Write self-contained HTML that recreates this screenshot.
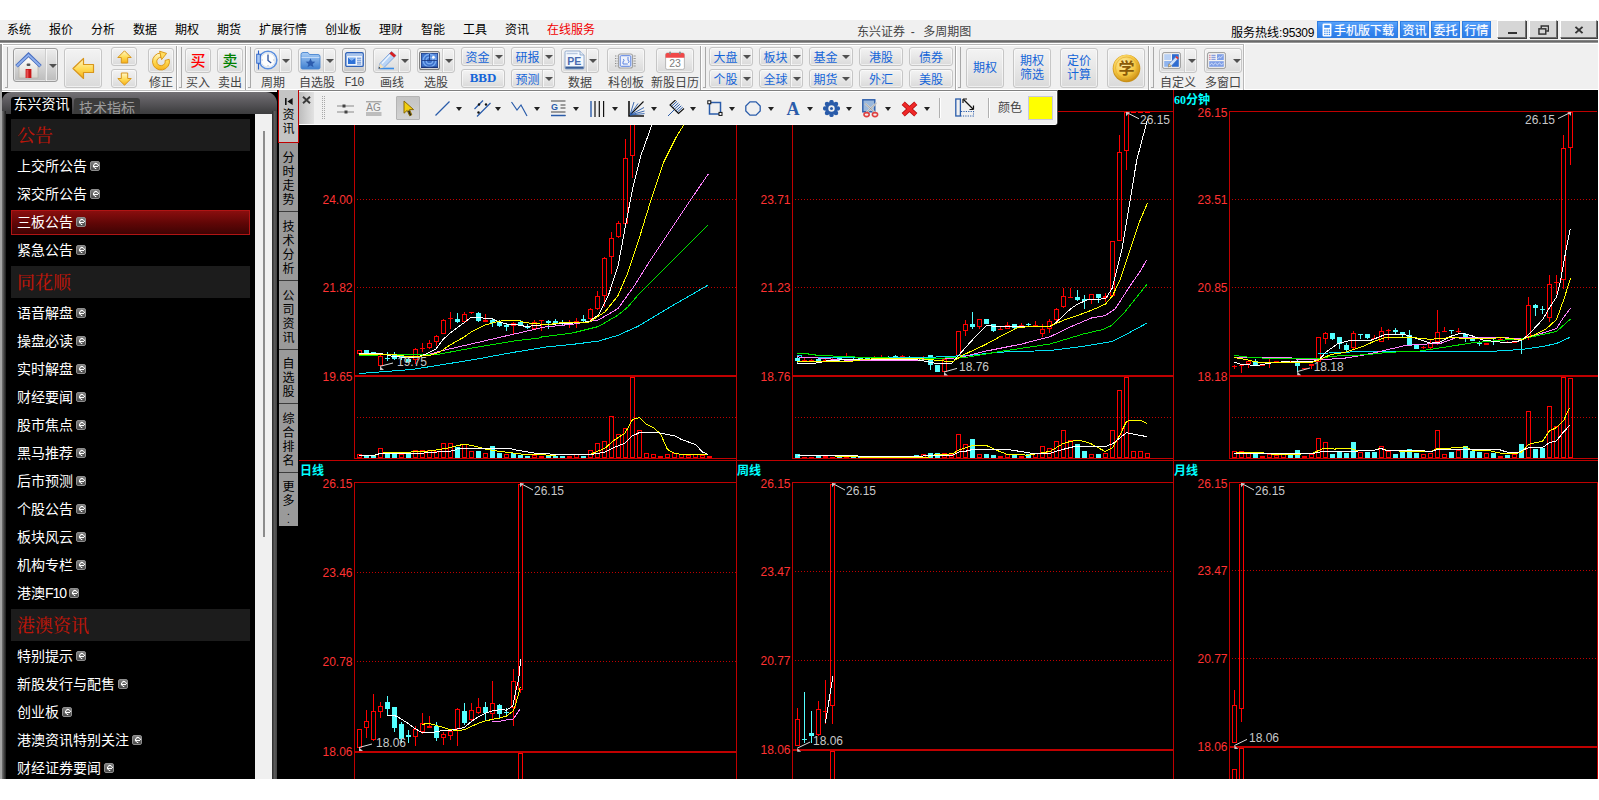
<!DOCTYPE html>
<html lang="zh-CN"><head><meta charset="utf-8"><title>东兴证券 - 多周期图</title>
<style>
html,body{margin:0;padding:0;background:#fff;}
body{width:1599px;height:800px;overflow:hidden;position:relative;font-family:"Liberation Sans","Noto Sans CJK SC",sans-serif;font-size:12px;color:#000;}
.a{position:absolute;}
#app{position:absolute;left:0;top:20px;width:1598px;height:759px;background:#f0f0f0;}
.mi{position:absolute;top:21px;height:20px;line-height:19px;font-size:12px;white-space:nowrap;}
.tb{position:absolute;box-sizing:border-box;border:1px solid #c6c6c6;border-radius:3px;background:linear-gradient(#f3f3f3,#e6e6e6 55%,#dadada);box-shadow:0 0 0 1px rgba(255,255,255,.55) inset;}
.tb i{position:absolute;top:0;bottom:0;width:1px;background:#cdcdcd;box-shadow:1px 0 0 rgba(255,255,255,.7);}
.lb{position:absolute;margin-top:1px;font-size:12px;line-height:14px;color:#444;white-space:nowrap;text-align:center;}
.bt{position:absolute;font-size:12px;line-height:14px;color:#1565d8;white-space:nowrap;text-align:center;}
.dd{position:absolute;width:0;height:0;border-left:4px solid transparent;border-right:4px solid transparent;border-top:4.5px solid #505050;}
.sep{position:absolute;width:1px;background:#a8a8a8;box-shadow:1px 0 0 #fff;}
.grip{position:absolute;width:3px;border-right:1px solid #a8a8a8;border-bottom:1px solid #a8a8a8;box-sizing:border-box;}

#lp{position:absolute;left:0;top:91px;width:277px;height:688px;background:#000;overflow:hidden;}
.sh{position:absolute;left:11px;width:239px;height:32px;background:#1c1c1c;color:#b8160a;font-size:18px;line-height:34px;font-family:"Liberation Serif","Noto Serif CJK SC",serif;font-weight:500;}
.sh span{position:absolute;left:6px;top:0;white-space:nowrap;}
.it{position:absolute;left:11px;width:239px;height:28px;color:#fff;font-size:14px;line-height:29px;white-space:nowrap;}
.it span{position:absolute;left:6px;top:0;}
.it b{display:inline-block;vertical-align:top;margin:9px 0 0 3px;width:8px;height:8px;border:1px solid #8e8e8e;border-radius:2px;background:linear-gradient(#7e7e7e,#4a4a4a);position:relative;font-weight:normal;}
.it b::after{content:"";position:absolute;left:1.5px;top:1px;width:4px;height:4px;border:1.2px solid #fff;border-radius:50%;border-right-color:transparent;transform:rotate(40deg);}
.it b::before{content:"";position:absolute;left:2px;top:3.6px;width:4.6px;height:1.1px;background:#fff;z-index:1;}
.vt{position:absolute;left:279px;width:19px;background:#9a9a9a;color:#000;font-size:12px;line-height:14px;text-align:center;box-sizing:border-box;border-bottom:1px solid #3c3c3c;}
.vt span{display:block;width:12px;margin:0 auto;word-break:break-all;}

#dt{position:absolute;left:299px;top:91px;width:758px;height:34px;background:#f0f0f0;border-radius:0 0 3px 0;box-shadow:1px 0 0 #505050;overflow:hidden;}
.da{position:absolute;top:16px;width:0;height:0;border-left:3.5px solid transparent;border-right:3.5px solid transparent;border-top:4px solid #222;}

#ch{position:absolute;left:299px;top:90px;}
#ch text{font-family:"Liberation Sans","Noto Sans CJK SC",sans-serif;font-size:12px;}
#ch .pl{fill:#ff3232;text-anchor:end;}
#ch .tt{fill:#00ffff;font-weight:bold;font-family:"Liberation Serif","Noto Sans CJK SC",sans-serif;}
#ch .gl{fill:#c8c8c8;}
</style></head>
<body>
<div id="app"></div>
<svg width="0" height="0" style="position:absolute"><defs>
<linearGradient id="gy" x1="0" y1="0" x2="0" y2="1"><stop offset="0" stop-color="#fff8cc"/><stop offset=".5" stop-color="#ffdc58"/><stop offset="1" stop-color="#f6b018"/></linearGradient>
<linearGradient id="gb" x1="0" y1="0" x2="0" y2="1"><stop offset="0" stop-color="#a8cdf6"/><stop offset="1" stop-color="#3f7fd0"/></linearGradient>
<linearGradient id="gb2" x1="0" y1="0" x2="1" y2="1"><stop offset="0" stop-color="#7fb2ee"/><stop offset="1" stop-color="#1f58b0"/></linearGradient>
<radialGradient id="gold" cx=".4" cy=".35" r=".7"><stop offset="0" stop-color="#fff2b0"/><stop offset=".6" stop-color="#f6c842"/><stop offset="1" stop-color="#c88a10"/></radialGradient>
<linearGradient id="gw" x1="0" y1="0" x2="0" y2="1"><stop offset="0" stop-color="#ffffff"/><stop offset="1" stop-color="#d8d4cc"/></linearGradient>
</defs></svg>
<div class="mi" style="left:7px">系统</div><div class="mi" style="left:49px">报价</div><div class="mi" style="left:91px">分析</div><div class="mi" style="left:133px">数据</div><div class="mi" style="left:175px">期权</div><div class="mi" style="left:217px">期货</div><div class="mi" style="left:259px">扩展行情</div><div class="mi" style="left:325px">创业板</div><div class="mi" style="left:379px">理财</div><div class="mi" style="left:421px">智能</div><div class="mi" style="left:463px">工具</div><div class="mi" style="left:505px">资讯</div><div class="mi" style="left:547px;color:#f00000">在线服务</div><div class="mi" style="left:857px;color:#444;top:23px">东兴证券<span style="letter-spacing:2.5px"> - </span>多周期图</div><div class="mi" style="left:1231px;top:24px">服务热线:<span style="letter-spacing:-.35px">95309</span></div><div class="a" style="left:1317px;top:21px;width:81px;height:17px;box-sizing:border-box;border:1px solid #2f7de0;background:linear-gradient(#58a2fa,#3a8af2 45%,#2a7ce8);color:#fff;font-size:12px;line-height:18px;text-shadow:0 0 1px rgba(255,255,255,.55);text-align:center;padding-left:13px;white-space:nowrap;overflow:hidden"><svg class="a" style="left:3.5px;top:1px" width="10" height="14" viewBox="0 0 9 13" preserveAspectRatio="none"><rect x="0.5" y="0.5" width="8" height="12" rx="1" fill="#fff"/><rect x="2" y="2" width="5" height="2.5" fill="#3a8cf0"/><g fill="#3a8cf0"><rect x="2" y="6" width="1.2" height="1.2"/><rect x="4" y="6" width="1.2" height="1.2"/><rect x="6" y="6" width="1.2" height="1.2"/><rect x="2" y="8" width="1.2" height="1.2"/><rect x="4" y="8" width="1.2" height="1.2"/><rect x="6" y="8" width="1.2" height="1.2"/><rect x="2" y="10" width="1.2" height="1.2"/><rect x="4" y="10" width="1.2" height="1.2"/><rect x="6" y="10" width="1.2" height="1.2"/></g></svg>手机版下载</div><div class="a" style="left:1400px;top:21px;width:29px;height:17px;box-sizing:border-box;border:1px solid #2f7de0;background:linear-gradient(#58a2fa,#3a8af2 45%,#2a7ce8);color:#fff;font-size:12px;line-height:18px;text-shadow:0 0 1px rgba(255,255,255,.55);text-align:center;white-space:nowrap;overflow:hidden">资讯</div><div class="a" style="left:1431px;top:21px;width:29px;height:17px;box-sizing:border-box;border:1px solid #2f7de0;background:linear-gradient(#58a2fa,#3a8af2 45%,#2a7ce8);color:#fff;font-size:12px;line-height:18px;text-shadow:0 0 1px rgba(255,255,255,.55);text-align:center;white-space:nowrap;overflow:hidden">委托</div><div class="a" style="left:1462px;top:21px;width:29px;height:17px;box-sizing:border-box;border:1px solid #2f7de0;background:linear-gradient(#58a2fa,#3a8af2 45%,#2a7ce8);color:#fff;font-size:12px;line-height:18px;text-shadow:0 0 1px rgba(255,255,255,.55);text-align:center;white-space:nowrap;overflow:hidden">行情</div><div class="a" style="left:1497px;top:20px;width:29px;height:18px;box-sizing:border-box;background:#d6d6d6;border-left:1px solid #fff;border-top:1px solid #fff;border-right:1px solid #707070;border-bottom:1px solid #707070;box-shadow:1px 1px 0 #404040"><div class="a" style="left:10px;top:11px;width:9px;height:2px;background:#333"></div></div><div class="a" style="left:1529px;top:20px;width:28px;height:18px;box-sizing:border-box;background:#d6d6d6;border-left:1px solid #fff;border-top:1px solid #fff;border-right:1px solid #707070;border-bottom:1px solid #707070;box-shadow:1px 1px 0 #404040"><svg class="a" style="left:8px;top:4px" width="11" height="10" viewBox="0 0 12 11"><path d="M3.5 3.5V1h8v5.5H9" fill="none" stroke="#333" stroke-width="1.6"/><rect x="1" y="4.2" width="7.5" height="5.8" fill="#d4d4d4" stroke="#333" stroke-width="1.6"/></svg></div><div class="a" style="left:1560px;top:20px;width:37px;height:18px;box-sizing:border-box;background:#d6d6d6;border-left:1px solid #fff;border-top:1px solid #fff;border-right:1px solid #707070;border-bottom:1px solid #707070;box-shadow:1px 1px 0 #404040"><svg class="a" style="left:13px;top:5px" width="10" height="8" viewBox="0 0 11 9"><path d="M1.5 1L9.5 8M9.5 1L1.5 8" stroke="#333" stroke-width="2.2" fill="none"/></svg></div><div class="a" style="left:0;top:40px;width:1598px;height:3px;background:linear-gradient(#8a8a8a,#6a6a6a 50%,#a8a8a8)"></div><div class="a" style="left:0;top:43px;width:1598px;height:1px;background:#fff"></div>
<div class="a" style="left:0;top:44px;width:2px;height:48px;background:#949494"></div><div class="a" style="left:2px;top:44px;width:1px;height:46px;background:#fff"></div><div class="grip" style="left:5px;top:47px;height:41px"></div><div class="a" style="left:2px;top:89px;width:1596px;height:1px;background:#fff"></div><div class="a" style="left:2px;top:90px;width:297px;height:1px;background:#bcbcbc"></div><div class="tb" style="left:13px;top:48px;width:45px;height:34px;background:linear-gradient(#ececec,#d4d4d4 55%,#bcbcbc);border-color:#9c9c9c;"><i style="left:31px"></i><svg class="a" style="left:1px;top:3px" width="27" height="28" viewBox="0 0 27 28"><path d="M4 13.5L13.5 5L23 13.5V26H4Z" fill="url(#gw)" stroke="#b8b4ac" stroke-width=".8"/><path d="M1.5 14.2L13.5 2.6L25.5 14.2" fill="none" stroke="#4a6fc0" stroke-width="3.6" stroke-linejoin="miter"/><path d="M1.8 14L13.5 2.9L25.2 14" fill="none" stroke="#8fb0ee" stroke-width="1.8"/><rect x="11.6" y="11.5" width="3.8" height="2.4" rx="1" fill="#555"/><rect x="10.6" y="17" width="5.8" height="9" fill="#c81818"/><rect x="11.4" y="17.8" width="2" height="8.2" fill="#e85050"/></svg><div class="dd" style="left:35px;top:15px;border-top-color:#505050"></div></div><div class="tb" style="left:64px;top:48px;width:38px;height:40px;"><svg class="a" style="left:7px;top:8px" width="23" height="23" viewBox="0 0 23 23"><path d="M1 11.5L11.5 1.5V7.5H21.5V15.5H11.5V21.5Z" fill="url(#gy)" stroke="#d8961c" stroke-width="1.2" stroke-linejoin="round"/></svg></div><div class="tb" style="left:111px;top:47px;width:26px;height:19px;"><svg class="a" style="left:5px;top:2px" width="15" height="14" viewBox="0 0 15 14"><path d="M7.5 .8L14.2 7.5H10.7V13H4.3V7.5H.8Z" fill="url(#gy)" stroke="#d8961c" stroke-width="1" stroke-linejoin="round"/></svg></div><div class="tb" style="left:111px;top:69px;width:26px;height:19px;"><svg class="a" style="left:5px;top:2px" width="15" height="14" viewBox="0 0 15 14"><path d="M7.5 13.2L14.2 6.5H10.7V1H4.3V6.5H.8Z" fill="url(#gy)" stroke="#d8961c" stroke-width="1" stroke-linejoin="round"/></svg></div><div class="tb" style="left:148px;top:48px;width:26px;height:25px;"><svg class="a" style="left:2px;top:1px" width="20" height="21" viewBox="0 0 20 21"><path d="M18.2 9.3A8.5 8.5 0 1 1 10 3L10 7.3A4.2 4.2 0 1 0 14.06 10.4Z" fill="url(#gy)" stroke="#d8920c" stroke-width=".9" stroke-linejoin="round"/><path d="M8.6 1.2L15.6 3.4L10.6 9.6Z" fill="#ffdc60" stroke="#d8920c" stroke-width=".9" stroke-linejoin="round"/></svg></div><div class="lb" style="left:139.0px;top:75px;width:44px">修正</div><div class="sep" style="left:176px;top:46px;height:44px"></div><div class="grip" style="left:179px;top:47px;height:41px"></div><div class="tb" style="left:185px;top:48px;width:26px;height:25px;"><div class="a" style="left:0;top:3px;width:24px;text-align:center;font-size:15px;line-height:17px;font-weight:500;color:#ff0000">买</div></div><div class="lb" style="left:176.0px;top:75px;width:44px">买入</div><div class="tb" style="left:217px;top:48px;width:26px;height:25px;"><div class="a" style="left:0;top:3px;width:24px;text-align:center;font-size:15px;line-height:17px;font-weight:500;color:#008000">卖</div></div><div class="lb" style="left:208.0px;top:75px;width:44px">卖出</div><div class="sep" style="left:245px;top:46px;height:44px"></div><div class="grip" style="left:248px;top:47px;height:41px"></div><div class="tb" style="left:254px;top:48px;width:38px;height:25px;"><i style="left:24px"></i><svg class="a" style="left:0px;top:0px" width="23" height="22" viewBox="0 0 23 22"><circle cx="13" cy="11" r="8.8" fill="#fdfdfd" stroke="#5a8ede" stroke-width="1.6"/><circle cx="13" cy="11" r="7.2" fill="none" stroke="#d4dce8" stroke-width=".9"/><path d="M13 4.6V5.8M13 16.2V17.4M6.6 11H7.8M18.2 11H19.4" stroke="#9aa8bc" stroke-width=".8"/><path d="M13 5.8V11.4L16.2 14" fill="none" stroke="#2a4f9a" stroke-width="1.3"/><path d="M3.5 1.5V20.5" stroke="#2a62c8" stroke-width="1.1"/><rect x="1.7" y="5.2" width="3.6" height="9" fill="#a8c8f4" stroke="#2a62c8" stroke-width=".9"/></svg><div class="dd" style="left:27px;top:10px;border-top-color:#505050"></div></div><div class="lb" style="left:251.0px;top:75px;width:44px">周期</div><div class="tb" style="left:298px;top:48px;width:38px;height:25px;"><i style="left:24px"></i><svg class="a" style="left:1px;top:1px" width="21" height="21" viewBox="0 0 21 21"><path d="M1 4.5Q1 2.5 3 2.5H8L9.5 4.5H18Q20 4.5 20 6.5V17.5Q20 19 18.5 19H2.5Q1 19 1 17.5Z" fill="url(#gb)" stroke="#4a86d0" stroke-width=".9"/><path d="M1.6 7.5H19.4" stroke="#cfe3fb" stroke-width=".8"/><path d="M10.5 8.2L11.9 11.4L15.3 11.7L12.7 13.9L13.5 17.2L10.5 15.4L7.5 17.2L8.3 13.9L5.7 11.7L9.1 11.4Z" fill="#2c5cae"/></svg><div class="dd" style="left:27px;top:10px;border-top-color:#505050"></div></div><div class="lb" style="left:289.0px;top:75px;width:56px">自选股</div><div class="tb" style="left:342px;top:48px;width:24px;height:25px;border-color:#a8a8a8;background:linear-gradient(#f0f0f0,#d8d8d8 70%,#c4c4c4);"><svg class="a" style="left:2px;top:3px" width="19" height="16" viewBox="0 0 19 16"><rect x=".8" y=".8" width="17.4" height="13.6" rx="1.2" fill="#eef4fc" stroke="#2f62b8" stroke-width="1.4"/><rect x="1.6" y="1.6" width="15.8" height="2.4" fill="#a8c4ec"/><path d="M3 5.5L6.8 8.5L10.5 5.5V12H3Z" fill="#2f72d8"/><path d="M3 5.5H10.5L6.8 8.5Z" fill="#7fb0f0"/><path d="M12 6.2H16.2M12 8.2H16.2M12 10.2H16.2M12 12H16.2" stroke="#4a7ccc" stroke-width=".9"/></svg></div><div class="lb" style="left:340px;top:75px;width:28px;font-family:'Liberation Mono',monospace;font-size:12px;letter-spacing:-.8px">F10</div><div class="tb" style="left:373px;top:48px;width:38px;height:25px;"><i style="left:24px"></i><svg class="a" style="left:3px;top:1px" width="20" height="20" viewBox="0 0 20 20"><path d="M2.5 18.5H17" stroke="#3a8ee8" stroke-width="1.6"/><path d="M14.5 1.5L19 5.5L7 17.5L1.6 18.6L3 13.4Z" fill="#b8d4f6" stroke="#6a98d8" stroke-width=".8"/><path d="M14.5 1.5L19 5.5L17 7.6L12.4 3.6Z" fill="#d82020"/><path d="M3 13.4L7 17.5L1.6 18.6Z" fill="#f4e0b8"/><path d="M1.6 18.6L3.4 18.2L2.1 16.8Z" fill="#222"/><path d="M13 5L5 13.4" stroke="#eef6ff" stroke-width="1.4"/></svg><div class="dd" style="left:27px;top:10px;border-top-color:#505050"></div></div><div class="lb" style="left:370.0px;top:75px;width:44px">画线</div><div class="tb" style="left:417px;top:48px;width:38px;height:25px;"><i style="left:24px"></i><svg class="a" style="left:1px;top:2px" width="21" height="19" viewBox="0 0 21 19"><rect x=".6" y=".6" width="19.8" height="17.8" rx="2" fill="#fdfdfd" stroke="#7c7c7c" stroke-width="1.1"/><rect x="2.4" y="2.4" width="16.2" height="14.2" fill="#3c70c8" stroke="#1c3f8c" stroke-width=".9"/><path d="M10.5 2.9H18.1V9.5H10.5Z" fill="#7aaaf0" opacity=".45"/><circle cx="10.5" cy="9.5" r="6.3" fill="none" stroke="#78aaf0" stroke-width="1.5"/><circle cx="10.5" cy="9.5" r="3.3" fill="none" stroke="#78aaf0" stroke-width="1.4"/><path d="M10.5 3V9.5M3 9.5H18" stroke="#16357c" stroke-width=".8"/><path d="M2.6 16.2H18.4" stroke="#10286a" stroke-width="1"/><circle cx="14.4" cy="6.4" r="1.4" fill="#fff"/></svg><div class="dd" style="left:27px;top:10px;border-top-color:#505050"></div></div><div class="lb" style="left:414.0px;top:75px;width:44px">选股</div><div class="tb" style="left:461px;top:47px;width:44px;height:19px;"><i style="left:30px"></i><div class="bt" style="left:0;top:2.5px;width:31px">资金</div><div class="dd" style="left:33px;top:7px;border-top-color:#505050"></div></div><div class="tb" style="left:461px;top:69px;width:44px;height:19px;"><div class="bt" style="left:0;top:1px;width:42px;font-family:'Liberation Serif',serif;font-weight:bold;font-size:13px">BBD</div></div><div class="tb" style="left:511px;top:47px;width:44px;height:19px;"><i style="left:30px"></i><div class="bt" style="left:0;top:2.5px;width:31px">研报</div><div class="dd" style="left:33px;top:7px;border-top-color:#505050"></div></div><div class="tb" style="left:511px;top:69px;width:44px;height:19px;"><i style="left:30px"></i><div class="bt" style="left:0;top:2.5px;width:31px">预测</div><div class="dd" style="left:33px;top:7px;border-top-color:#505050"></div></div><div class="tb" style="left:561px;top:48px;width:38px;height:25px;"><i style="left:24px"></i><svg class="a" style="left:2px;top:1px" width="21" height="20" viewBox="0 0 21 20"><path d="M1 2.2Q1 1 2.2 1H16L20 5V17.8Q20 19 18.8 19H2.2Q1 19 1 17.8Z" fill="#f4f8fd" stroke="#8aa4c8" stroke-width=".9"/><path d="M16 1V5H20" fill="#dfe8f4" stroke="#8aa4c8" stroke-width=".8"/><path d="M1.4 16.5H19.6V18.2Q19.6 18.8 19 18.8H2Q1.4 18.8 1.4 18.2Z" fill="#3a5f98"/><rect x="2.6" y="2.8" width="11" height="1.4" fill="#b8c8e0"/><text x="3.2" y="14.6" font-family="Liberation Sans,sans-serif" font-weight="bold" font-size="10.5" fill="#4a6cb0">PE</text></svg><div class="dd" style="left:27px;top:10px;border-top-color:#505050"></div></div><div class="lb" style="left:558.0px;top:75px;width:44px">数据</div><div class="tb" style="left:607px;top:48px;width:38px;height:25px;"><svg class="a" style="left:6px;top:4px" width="23" height="16" viewBox="0 0 23 16"><rect x="4.5" y="1" width="14" height="14" rx="2" fill="#eef2fb" stroke="#a0a0a0" stroke-width="1.1"/><rect x="6.2" y="2.7" width="10.6" height="10.6" rx="1" fill="none" stroke="#5a82e0" stroke-width="1"/><path d="M9 11V8.5M9 8.5A1 1 0 1 0 9 6.4M14 4V7.5M14 7.5A1 1 0 1 1 14 9.6M9 11H13.8" fill="none" stroke="#5a82e0" stroke-width="1"/><path d="M1 3H3.4M1 5.5H3.4M1 8H3.4M1 10.5H3.4M1 13H3.4M19.6 3H22M19.6 5.5H22M19.6 8H22M19.6 10.5H22M19.6 13H22" stroke="#8c8c8c" stroke-width="1" stroke-dasharray="1.2 .6"/></svg></div><div class="lb" style="left:598.0px;top:75px;width:56px">科创板</div><div class="tb" style="left:656px;top:48px;width:38px;height:25px;"><svg class="a" style="left:8px;top:2px" width="20" height="19" viewBox="0 0 20 19"><rect x=".6" y="2" width="18.8" height="16.4" rx="1.6" fill="#fff" stroke="#b0b0b0" stroke-width=".9"/><path d="M.6 6.8V3.6Q.6 2 2.2 2H17.8Q19.4 2 19.4 3.6V6.8Z" fill="#f04848"/><rect x="4.2" y=".4" width="1.8" height="3.2" rx=".8" fill="#888"/><rect x="14" y=".4" width="1.8" height="3.2" rx=".8" fill="#888"/><text x="10" y="16.4" text-anchor="middle" font-family="Liberation Sans,sans-serif" font-size="10.5" fill="#7c7c7c">23</text></svg></div><div class="lb" style="left:641.0px;top:75px;width:68px">新股日历</div><div class="sep" style="left:700px;top:46px;height:44px"></div><div class="grip" style="left:703px;top:47px;height:41px"></div><div class="tb" style="left:709px;top:47px;width:44px;height:19px;"><i style="left:30px"></i><div class="bt" style="left:0;top:2.5px;width:31px">大盘</div><div class="dd" style="left:33px;top:7px;border-top-color:#505050"></div></div><div class="tb" style="left:709px;top:69px;width:44px;height:19px;"><i style="left:30px"></i><div class="bt" style="left:0;top:2.5px;width:31px">个股</div><div class="dd" style="left:33px;top:7px;border-top-color:#505050"></div></div><div class="tb" style="left:759px;top:47px;width:44px;height:19px;"><i style="left:30px"></i><div class="bt" style="left:0;top:2.5px;width:31px">板块</div><div class="dd" style="left:33px;top:7px;border-top-color:#505050"></div></div><div class="tb" style="left:759px;top:69px;width:44px;height:19px;"><i style="left:30px"></i><div class="bt" style="left:0;top:2.5px;width:31px">全球</div><div class="dd" style="left:33px;top:7px;border-top-color:#505050"></div></div><div class="tb" style="left:809px;top:47px;width:44px;height:19px;"><div class="bt" style="left:0;top:2.5px;width:31px">基金</div><div class="dd" style="left:32px;top:7px;border-top-color:#505050"></div></div><div class="tb" style="left:809px;top:69px;width:44px;height:19px;"><div class="bt" style="left:0;top:2.5px;width:31px">期货</div><div class="dd" style="left:32px;top:7px;border-top-color:#505050"></div></div><div class="tb" style="left:859px;top:47px;width:44px;height:19px;"><div class="bt" style="left:0;top:2.5px;width:42px">港股</div></div><div class="tb" style="left:859px;top:69px;width:44px;height:19px;"><div class="bt" style="left:0;top:2.5px;width:42px">外汇</div></div><div class="tb" style="left:909px;top:47px;width:44px;height:19px;"><div class="bt" style="left:0;top:2.5px;width:42px">债券</div></div><div class="tb" style="left:909px;top:69px;width:44px;height:19px;"><div class="bt" style="left:0;top:2.5px;width:42px">美股</div></div><div class="sep" style="left:955px;top:46px;height:44px"></div><div class="grip" style="left:958px;top:47px;height:41px"></div><div class="tb" style="left:966px;top:48px;width:38px;height:40px;"><div class="bt" style="left:0;top:12px;width:36px">期权</div></div><div class="tb" style="left:1013px;top:48px;width:38px;height:40px;"><div class="bt" style="left:0;top:5px;width:36px;line-height:14px">期权<br>筛选</div></div><div class="tb" style="left:1060px;top:48px;width:38px;height:40px;"><div class="bt" style="left:0;top:5px;width:36px;line-height:14px">定价<br>计算</div></div><div class="tb" style="left:1107px;top:48px;width:38px;height:40px;"><svg class="a" style="left:4px;top:5px" width="29" height="29" viewBox="0 0 29 29"><circle cx="14.5" cy="14.5" r="13.8" fill="#c8901a"/><circle cx="14.5" cy="14" r="13.2" fill="url(#gold)"/><circle cx="14.5" cy="14" r="11" fill="none" stroke="#e0a830" stroke-width=".8" opacity=".8"/><text x="14.5" y="20.3" text-anchor="middle" font-family="Noto Sans CJK SC,sans-serif" font-weight="bold" font-size="16" fill="#8a5a08">学</text></svg></div><div class="sep" style="left:1148px;top:46px;height:44px"></div><div class="grip" style="left:1151px;top:47px;height:41px"></div><div class="tb" style="left:1159px;top:48px;width:38px;height:25px;"><i style="left:24px"></i><svg class="a" style="left:1.5px;top:3px" width="19" height="17" viewBox="0 0 19 17"><rect x=".6" y=".6" width="17.8" height="15.8" rx="1.5" fill="#f2f2f2" stroke="#909090" stroke-width=".9"/><rect x="2.2" y="2.2" width="6.8" height="5.8" fill="#b8d0f4"/><rect x="2.2" y="9" width="6.8" height="5.8" fill="#8fb4ee"/><rect x="10" y="2.2" width="6.8" height="12.6" fill="#2f6cd0"/><path d="M14.6 4L16.8 6L9.4 14L6.4 14.8L7 11.8Z" fill="#cfe0f8" stroke="#4a78c8" stroke-width=".7"/><path d="M14.6 4L16.8 6L15.6 7.3L13.4 5.3Z" fill="#e03030"/><path d="M6.4 14.8L7 11.8L9.4 14Z" fill="#f4ddb0" stroke="#a07828" stroke-width=".5"/></svg><div class="dd" style="left:28px;top:10px;border-top-color:#505050"></div></div><div class="lb" style="left:1150.0px;top:75px;width:56px">自定义</div><div class="tb" style="left:1204px;top:48px;width:38px;height:25px;"><svg class="a" style="left:1.5px;top:3px" width="19" height="17" viewBox="0 0 19 17"><rect x=".6" y=".6" width="17.8" height="15.8" rx="1.5" fill="#f2f2f2" stroke="#909090" stroke-width=".9"/><path d="M2.4 3.3H3.4M2.4 5.3H3.4M2.4 7.3H3.4" stroke="#c03050" stroke-width="1"/><path d="M4.4 3.3H8.6M4.4 5.3H8.6M4.4 7.3H8.6" stroke="#7088d8" stroke-width="1"/><rect x="10" y="2.2" width="6.8" height="5.8" fill="#7f9fe6"/><path d="M10.6 6.8L12.4 4.8L13.6 5.8L15.8 3.4" stroke="#e8eefc" stroke-width=".8" fill="none"/><rect x="2.2" y="9.2" width="14.6" height="5.6" fill="#7f9fe6"/><path d="M2.6 13.2L4.6 11.2L6.4 12.8L8.4 11L10.4 12.8L12.4 11L14.4 12.6L16.4 11.4" stroke="#e8eefc" stroke-width=".8" fill="none"/></svg><div class="dd" style="left:28px;top:10px;border-top-color:#505050"></div></div><div class="lb" style="left:1195.0px;top:75px;width:56px">多窗口</div><div class="a" style="left:1243px;top:44px;width:1px;height:46px;background:#b8b8b8;box-shadow:1px 0 0 #fff"></div><div class="a" style="left:3px;top:44px;width:1241px;height:1px;background:#b8b8b8"></div><div class="a" style="left:3px;top:45px;width:1240px;height:1px;background:#fff"></div>
<svg id="ch" width="1299" height="689" viewBox="299 90 1299 689" shape-rendering="crispEdges"><rect x="299" y="90" width="1299" height="689" fill="#000"/><rect x="736" y="90" width="1" height="689" fill="#c00000"/><rect x="1173" y="90" width="1" height="689" fill="#c00000"/><rect x="1597" y="482" width="1" height="297" fill="#c00000"/><rect x="299" y="460" width="1299" height="1" fill="#c00000"/><rect x="354" y="111" width="1" height="348" fill="#c00000"/><rect x="354" y="111" width="382" height="1" fill="#c00000"/><path d="M357 199.5H736" stroke="#c00000" stroke-width="1" stroke-dasharray="1 2" fill="none"/><path d="M357 287.5H736" stroke="#c00000" stroke-width="1" stroke-dasharray="1 2" fill="none"/><rect x="354" y="375" width="383" height="2" fill="#c00000"/><path d="M357 417.5H736" stroke="#c00000" stroke-width="1" stroke-dasharray="1 2" fill="none"/><rect x="354" y="458" width="383" height="1" fill="#c00000"/><text class="pl" x="352.5" y="117">26.18</text><text class="pl" x="352.5" y="204">24.00</text><text class="pl" x="352.5" y="292">21.82</text><text class="pl" x="352.5" y="381">19.65</text><text class="tt" x="300" y="104">5分钟</text><rect x="792" y="111" width="1" height="348" fill="#c00000"/><rect x="792" y="111" width="381" height="1" fill="#c00000"/><path d="M795 199.5H1173" stroke="#c00000" stroke-width="1" stroke-dasharray="1 2" fill="none"/><path d="M795 287.5H1173" stroke="#c00000" stroke-width="1" stroke-dasharray="1 2" fill="none"/><rect x="792" y="375" width="382" height="2" fill="#c00000"/><path d="M795 417.5H1173" stroke="#c00000" stroke-width="1" stroke-dasharray="1 2" fill="none"/><rect x="792" y="458" width="382" height="1" fill="#c00000"/><text class="pl" x="790.5" y="117">26.15</text><text class="pl" x="790.5" y="204">23.71</text><text class="pl" x="790.5" y="292">21.23</text><text class="pl" x="790.5" y="381">18.76</text><text class="tt" x="737" y="104">30分钟</text><rect x="1229" y="111" width="1" height="348" fill="#c00000"/><rect x="1229" y="111" width="368" height="1" fill="#c00000"/><path d="M1232 199.5H1597" stroke="#c00000" stroke-width="1" stroke-dasharray="1 2" fill="none"/><path d="M1232 287.5H1597" stroke="#c00000" stroke-width="1" stroke-dasharray="1 2" fill="none"/><rect x="1229" y="375" width="369" height="2" fill="#c00000"/><path d="M1232 417.5H1597" stroke="#c00000" stroke-width="1" stroke-dasharray="1 2" fill="none"/><rect x="1229" y="458" width="369" height="1" fill="#c00000"/><text class="pl" x="1227.5" y="117">26.15</text><text class="pl" x="1227.5" y="204">23.51</text><text class="pl" x="1227.5" y="292">20.85</text><text class="pl" x="1227.5" y="381">18.18</text><text class="tt" x="1174" y="104">60分钟</text><rect x="354" y="482" width="1" height="297" fill="#c00000"/><rect x="354" y="482" width="382" height="1" fill="#c00000"/><path d="M357 572.5H736" stroke="#c00000" stroke-width="1" stroke-dasharray="1 2" fill="none"/><path d="M357 661.5H736" stroke="#c00000" stroke-width="1" stroke-dasharray="1 2" fill="none"/><rect x="354" y="751" width="383" height="2" fill="#c00000"/><text class="pl" x="352.5" y="488">26.15</text><text class="pl" x="352.5" y="577">23.46</text><text class="pl" x="352.5" y="666">20.78</text><text class="pl" x="352.5" y="756">18.06</text><text class="tt" x="300" y="475">日线</text><rect x="792" y="482" width="1" height="297" fill="#c00000"/><rect x="792" y="482" width="381" height="1" fill="#c00000"/><path d="M795 571.5H1173" stroke="#c00000" stroke-width="1" stroke-dasharray="1 2" fill="none"/><path d="M795 660.5H1173" stroke="#c00000" stroke-width="1" stroke-dasharray="1 2" fill="none"/><rect x="792" y="749" width="382" height="2" fill="#c00000"/><text class="pl" x="790.5" y="488">26.15</text><text class="pl" x="790.5" y="576">23.47</text><text class="pl" x="790.5" y="665">20.77</text><text class="pl" x="790.5" y="754">18.06</text><text class="tt" x="737" y="475">周线</text><rect x="1229" y="482" width="1" height="297" fill="#c00000"/><rect x="1229" y="482" width="368" height="1" fill="#c00000"/><path d="M1232 570.5H1597" stroke="#c00000" stroke-width="1" stroke-dasharray="1 2" fill="none"/><path d="M1232 658.5H1597" stroke="#c00000" stroke-width="1" stroke-dasharray="1 2" fill="none"/><rect x="1229" y="746" width="369" height="2" fill="#c00000"/><text class="pl" x="1227.5" y="488">26.15</text><text class="pl" x="1227.5" y="575">23.47</text><text class="pl" x="1227.5" y="663">20.77</text><text class="pl" x="1227.5" y="751">18.06</text><text class="tt" x="1174" y="475">月线</text><g shape-rendering="crispEdges"><clipPath id="cp1"><rect x="299" y="112" width="1299" height="263"/></clipPath><clipPath id="cp2"><rect x="299" y="483" width="1299" height="296"/></clipPath><g clip-path="url(#cp1)"><rect x="357.5" y="350.5" width="4" height="3" fill="none" stroke="#ff0000" stroke-width="1"/><rect x="364" y="350" width="5" height="4" fill="#54ffff"/><rect x="371" y="352" width="5" height="2" fill="#54ffff"/><rect x="380" y="353" width="1" height="3" fill="#ff0000"/><rect x="378.5" y="356.5" width="4" height="9" fill="none" stroke="#ff0000" stroke-width="1"/><rect x="387" y="352" width="1" height="6" fill="#54ffff"/><rect x="387" y="359" width="1" height="2" fill="#54ffff"/><rect x="385" y="358" width="5" height="1" fill="#54ffff"/><rect x="394" y="352" width="1" height="2" fill="#54ffff"/><rect x="394" y="359" width="1" height="1" fill="#54ffff"/><rect x="392" y="354" width="5" height="5" fill="#54ffff"/><rect x="401" y="355" width="1" height="1" fill="#54ffff"/><rect x="401" y="358" width="1" height="2" fill="#54ffff"/><rect x="399" y="356" width="5" height="2" fill="#54ffff"/><rect x="408" y="358" width="1" height="1" fill="#54ffff"/><rect x="408" y="362" width="1" height="1" fill="#54ffff"/><rect x="406" y="359" width="5" height="3" fill="#54ffff"/><rect x="415" y="348" width="1" height="1" fill="#ff0000"/><rect x="415" y="360" width="1" height="4" fill="#ff0000"/><rect x="413.5" y="349.5" width="4" height="10" fill="none" stroke="#ff0000" stroke-width="1"/><rect x="422" y="343" width="1" height="5" fill="#ff0000"/><rect x="422" y="349" width="1" height="3" fill="#ff0000"/><rect x="420" y="348" width="5" height="1" fill="#ff0000"/><rect x="429" y="340" width="1" height="3" fill="#ff0000"/><rect x="429" y="348" width="1" height="1" fill="#ff0000"/><rect x="427.5" y="343.5" width="4" height="4" fill="none" stroke="#ff0000" stroke-width="1"/><rect x="436" y="335" width="1" height="1" fill="#ff0000"/><rect x="436" y="342" width="1" height="4" fill="#ff0000"/><rect x="434.5" y="336.5" width="4" height="5" fill="none" stroke="#ff0000" stroke-width="1"/><rect x="443" y="319" width="1" height="1" fill="#ff0000"/><rect x="441.5" y="320.5" width="4" height="13" fill="none" stroke="#ff0000" stroke-width="1"/><rect x="450" y="312" width="1" height="6" fill="#ff0000"/><rect x="450" y="319" width="1" height="10" fill="#ff0000"/><rect x="448" y="318" width="5" height="1" fill="#ff0000"/><rect x="457" y="313" width="1" height="6" fill="#54ffff"/><rect x="457" y="322" width="1" height="1" fill="#54ffff"/><rect x="455" y="319" width="5" height="3" fill="#54ffff"/><rect x="464" y="312" width="1" height="2" fill="#ff0000"/><rect x="462.5" y="314.5" width="4" height="7" fill="none" stroke="#ff0000" stroke-width="1"/><rect x="471" y="313" width="1" height="1" fill="#ff0000"/><rect x="469" y="312" width="5" height="1" fill="#ff0000"/><rect x="478" y="312" width="1" height="1" fill="#54ffff"/><rect x="478" y="321" width="1" height="1" fill="#54ffff"/><rect x="476" y="313" width="5" height="8" fill="#54ffff"/><rect x="485" y="314" width="1" height="6" fill="#ff0000"/><rect x="483" y="320" width="5" height="2" fill="#ff0000"/><rect x="492" y="318" width="1" height="2" fill="#54ffff"/><rect x="492" y="323" width="1" height="4" fill="#54ffff"/><rect x="490" y="320" width="5" height="3" fill="#54ffff"/><rect x="499" y="320" width="1" height="2" fill="#54ffff"/><rect x="499" y="326" width="1" height="1" fill="#54ffff"/><rect x="497" y="322" width="5" height="4" fill="#54ffff"/><rect x="506" y="324" width="1" height="1" fill="#54ffff"/><rect x="506" y="327" width="1" height="4" fill="#54ffff"/><rect x="504" y="325" width="5" height="2" fill="#54ffff"/><rect x="513" y="322" width="1" height="1" fill="#ff0000"/><rect x="513" y="326" width="1" height="9" fill="#ff0000"/><rect x="511.5" y="323.5" width="4" height="2" fill="none" stroke="#ff0000" stroke-width="1"/><rect x="520" y="320" width="1" height="2" fill="#54ffff"/><rect x="518" y="322" width="5" height="4" fill="#54ffff"/><rect x="527" y="324" width="1" height="2" fill="#54ffff"/><rect x="527" y="328" width="1" height="1" fill="#54ffff"/><rect x="525" y="326" width="5" height="2" fill="#54ffff"/><rect x="534" y="320" width="1" height="2" fill="#ff0000"/><rect x="534" y="329" width="1" height="1" fill="#ff0000"/><rect x="532.5" y="322.5" width="4" height="6" fill="none" stroke="#ff0000" stroke-width="1"/><rect x="541" y="321" width="1" height="10" fill="#ff0000"/><rect x="539" y="320" width="5" height="1" fill="#ff0000"/><rect x="548" y="320" width="1" height="1" fill="#54ffff"/><rect x="548" y="323" width="1" height="6" fill="#54ffff"/><rect x="546" y="321" width="5" height="2" fill="#54ffff"/><rect x="555" y="319" width="1" height="2" fill="#54ffff"/><rect x="555" y="324" width="1" height="2" fill="#54ffff"/><rect x="553" y="321" width="5" height="3" fill="#54ffff"/><rect x="562" y="320" width="1" height="2" fill="#54ffff"/><rect x="562" y="324" width="1" height="2" fill="#54ffff"/><rect x="560" y="322" width="5" height="2" fill="#54ffff"/><rect x="569" y="320" width="1" height="2" fill="#ff0000"/><rect x="569" y="323" width="1" height="5" fill="#ff0000"/><rect x="567" y="322" width="5" height="1" fill="#ff0000"/><rect x="576" y="318" width="1" height="3" fill="#ff0000"/><rect x="576" y="324" width="1" height="4" fill="#ff0000"/><rect x="574.5" y="321.5" width="4" height="2" fill="none" stroke="#ff0000" stroke-width="1"/><rect x="583" y="315" width="1" height="4" fill="#54ffff"/><rect x="583" y="321" width="1" height="2" fill="#54ffff"/><rect x="581" y="319" width="5" height="2" fill="#54ffff"/><rect x="590" y="308" width="1" height="1" fill="#ff0000"/><rect x="590" y="319" width="1" height="1" fill="#ff0000"/><rect x="588.5" y="309.5" width="4" height="9" fill="none" stroke="#ff0000" stroke-width="1"/><rect x="597" y="291" width="1" height="5" fill="#ff0000"/><rect x="597" y="309" width="1" height="1" fill="#ff0000"/><rect x="595.5" y="296.5" width="4" height="12" fill="none" stroke="#ff0000" stroke-width="1"/><rect x="604" y="257" width="1" height="1" fill="#ff0000"/><rect x="604" y="296" width="1" height="11" fill="#ff0000"/><rect x="602.5" y="258.5" width="4" height="37" fill="none" stroke="#ff0000" stroke-width="1"/><rect x="611" y="232" width="1" height="6" fill="#ff0000"/><rect x="611" y="257" width="1" height="17" fill="#ff0000"/><rect x="609.5" y="238.5" width="4" height="18" fill="none" stroke="#ff0000" stroke-width="1"/><rect x="618" y="221" width="1" height="2" fill="#ff0000"/><rect x="618" y="237" width="1" height="1" fill="#ff0000"/><rect x="616.5" y="223.5" width="4" height="13" fill="none" stroke="#ff0000" stroke-width="1"/><rect x="625" y="139" width="1" height="19" fill="#ff0000"/><rect x="625" y="224" width="1" height="1" fill="#ff0000"/><rect x="623.5" y="158.5" width="4" height="65" fill="none" stroke="#ff0000" stroke-width="1"/><rect x="632" y="156" width="1" height="22" fill="#ff0000"/><rect x="630.5" y="110.5" width="4" height="45" fill="none" stroke="#ff0000" stroke-width="1"/><rect x="637" y="112" width="5" height="1" fill="#ff0000"/><rect x="644" y="112" width="5" height="1" fill="#ff0000"/><rect x="651" y="112" width="5" height="1" fill="#ff0000"/><rect x="658" y="112" width="5" height="1" fill="#ff0000"/><rect x="665" y="112" width="5" height="1" fill="#ff0000"/><rect x="672" y="112" width="5" height="1" fill="#ff0000"/><rect x="679" y="112" width="5" height="1" fill="#ff0000"/><rect x="686" y="112" width="5" height="1" fill="#ff0000"/><rect x="693" y="112" width="5" height="1" fill="#ff0000"/><rect x="700" y="112" width="5" height="1" fill="#ff0000"/><rect x="707" y="112" width="5" height="1" fill="#ff0000"/><rect x="797" y="356" width="1" height="2" fill="#54ffff"/><rect x="797" y="361" width="1" height="2" fill="#54ffff"/><rect x="795" y="358" width="5" height="3" fill="#54ffff"/><rect x="804" y="358" width="1" height="2" fill="#ff0000"/><rect x="804" y="361" width="1" height="1" fill="#ff0000"/><rect x="802" y="360" width="5" height="1" fill="#ff0000"/><rect x="811" y="359" width="1" height="1" fill="#ff0000"/><rect x="811" y="361" width="1" height="1" fill="#ff0000"/><rect x="809" y="360" width="5" height="1" fill="#ff0000"/><rect x="818" y="357" width="1" height="2" fill="#54ffff"/><rect x="818" y="361" width="1" height="1" fill="#54ffff"/><rect x="816" y="359" width="5" height="2" fill="#54ffff"/><rect x="825" y="359" width="1" height="1" fill="#ff0000"/><rect x="823" y="360" width="5" height="1" fill="#ff0000"/><rect x="832" y="357" width="1" height="2" fill="#ff0000"/><rect x="832" y="360" width="1" height="1" fill="#ff0000"/><rect x="830" y="359" width="5" height="1" fill="#ff0000"/><rect x="839" y="356" width="1" height="1" fill="#54ffff"/><rect x="839" y="359" width="1" height="2" fill="#54ffff"/><rect x="837" y="357" width="5" height="2" fill="#54ffff"/><rect x="846" y="353" width="1" height="3" fill="#ff0000"/><rect x="846" y="357" width="1" height="1" fill="#ff0000"/><rect x="844" y="356" width="5" height="1" fill="#ff0000"/><rect x="853" y="356" width="1" height="1" fill="#54ffff"/><rect x="853" y="358" width="1" height="1" fill="#54ffff"/><rect x="851" y="357" width="5" height="1" fill="#54ffff"/><rect x="860" y="357" width="1" height="1" fill="#54ffff"/><rect x="860" y="359" width="1" height="1" fill="#54ffff"/><rect x="858" y="358" width="5" height="1" fill="#54ffff"/><rect x="867" y="357" width="1" height="1" fill="#54ffff"/><rect x="867" y="359" width="1" height="1" fill="#54ffff"/><rect x="865" y="358" width="5" height="1" fill="#54ffff"/><rect x="874" y="356" width="1" height="1" fill="#ff0000"/><rect x="874" y="358" width="1" height="1" fill="#ff0000"/><rect x="872" y="357" width="5" height="1" fill="#ff0000"/><rect x="881" y="355" width="1" height="2" fill="#ff0000"/><rect x="881" y="358" width="1" height="1" fill="#ff0000"/><rect x="879" y="357" width="5" height="1" fill="#ff0000"/><rect x="888" y="356" width="1" height="1" fill="#54ffff"/><rect x="888" y="358" width="1" height="1" fill="#54ffff"/><rect x="886" y="357" width="5" height="1" fill="#54ffff"/><rect x="895" y="355" width="1" height="1" fill="#54ffff"/><rect x="895" y="357" width="1" height="1" fill="#54ffff"/><rect x="893" y="356" width="5" height="1" fill="#54ffff"/><rect x="902" y="355" width="1" height="1" fill="#ff0000"/><rect x="902" y="357" width="1" height="1" fill="#ff0000"/><rect x="900" y="356" width="5" height="1" fill="#ff0000"/><rect x="909" y="356" width="1" height="1" fill="#54ffff"/><rect x="909" y="358" width="1" height="1" fill="#54ffff"/><rect x="907" y="357" width="5" height="1" fill="#54ffff"/><rect x="916" y="357" width="1" height="1" fill="#ff0000"/><rect x="914" y="358" width="5" height="1" fill="#ff0000"/><rect x="923" y="356" width="1" height="1" fill="#ff0000"/><rect x="923" y="358" width="1" height="1" fill="#ff0000"/><rect x="921" y="357" width="5" height="1" fill="#ff0000"/><rect x="930" y="365" width="1" height="5" fill="#54ffff"/><rect x="928" y="355" width="5" height="10" fill="#54ffff"/><rect x="935" y="365" width="5" height="7" fill="#54ffff"/><rect x="942.5" y="359.5" width="4" height="12" fill="none" stroke="#ff0000" stroke-width="1"/><rect x="951" y="357" width="1" height="1" fill="#ff0000"/><rect x="949" y="356" width="5" height="1" fill="#ff0000"/><rect x="956.5" y="331.5" width="4" height="24" fill="none" stroke="#ff0000" stroke-width="1"/><rect x="965" y="320" width="1" height="4" fill="#ff0000"/><rect x="965" y="331" width="1" height="5" fill="#ff0000"/><rect x="963.5" y="324.5" width="4" height="6" fill="none" stroke="#ff0000" stroke-width="1"/><rect x="972" y="312" width="1" height="12" fill="#54ffff"/><rect x="972" y="327" width="1" height="2" fill="#54ffff"/><rect x="970" y="324" width="5" height="3" fill="#54ffff"/><rect x="979" y="327" width="1" height="2" fill="#ff0000"/><rect x="977.5" y="319.5" width="4" height="7" fill="none" stroke="#ff0000" stroke-width="1"/><rect x="984" y="319" width="5" height="5" fill="#54ffff"/><rect x="993" y="331" width="1" height="1" fill="#54ffff"/><rect x="991" y="324" width="5" height="7" fill="#54ffff"/><rect x="1000" y="327" width="1" height="2" fill="#ff0000"/><rect x="998" y="329" width="5" height="1" fill="#ff0000"/><rect x="1007" y="322" width="1" height="3" fill="#ff0000"/><rect x="1005.5" y="325.5" width="4" height="3" fill="none" stroke="#ff0000" stroke-width="1"/><rect x="1014" y="328" width="1" height="1" fill="#54ffff"/><rect x="1012" y="324" width="5" height="4" fill="#54ffff"/><rect x="1021" y="323" width="1" height="2" fill="#ff0000"/><rect x="1021" y="327" width="1" height="1" fill="#ff0000"/><rect x="1019.5" y="325.5" width="4" height="1" fill="none" stroke="#ff0000" stroke-width="1"/><rect x="1028" y="323" width="1" height="1" fill="#54ffff"/><rect x="1028" y="325" width="1" height="1" fill="#54ffff"/><rect x="1026" y="324" width="5" height="1" fill="#54ffff"/><rect x="1035" y="321" width="1" height="4" fill="#ff0000"/><rect x="1033" y="325" width="5" height="1" fill="#ff0000"/><rect x="1042" y="324" width="1" height="5" fill="#ff0000"/><rect x="1042" y="334" width="1" height="3" fill="#ff0000"/><rect x="1040.5" y="329.5" width="4" height="4" fill="none" stroke="#ff0000" stroke-width="1"/><rect x="1049" y="319" width="1" height="2" fill="#ff0000"/><rect x="1049" y="329" width="1" height="4" fill="#ff0000"/><rect x="1047.5" y="321.5" width="4" height="7" fill="none" stroke="#ff0000" stroke-width="1"/><rect x="1056" y="308" width="1" height="1" fill="#ff0000"/><rect x="1056" y="320" width="1" height="2" fill="#ff0000"/><rect x="1054.5" y="309.5" width="4" height="10" fill="none" stroke="#ff0000" stroke-width="1"/><rect x="1063" y="288" width="1" height="8" fill="#ff0000"/><rect x="1063" y="307" width="1" height="1" fill="#ff0000"/><rect x="1061.5" y="296.5" width="4" height="10" fill="none" stroke="#ff0000" stroke-width="1"/><rect x="1070" y="288" width="1" height="9" fill="#ff0000"/><rect x="1068" y="297" width="5" height="1" fill="#ff0000"/><rect x="1077" y="290" width="1" height="7" fill="#54ffff"/><rect x="1077" y="300" width="1" height="1" fill="#54ffff"/><rect x="1075" y="297" width="5" height="3" fill="#54ffff"/><rect x="1084" y="295" width="1" height="4" fill="#54ffff"/><rect x="1084" y="301" width="1" height="8" fill="#54ffff"/><rect x="1082" y="299" width="5" height="2" fill="#54ffff"/><rect x="1091" y="300" width="1" height="4" fill="#ff0000"/><rect x="1089.5" y="294.5" width="4" height="5" fill="none" stroke="#ff0000" stroke-width="1"/><rect x="1098" y="298" width="1" height="5" fill="#54ffff"/><rect x="1096" y="294" width="5" height="4" fill="#54ffff"/><rect x="1105" y="293" width="1" height="3" fill="#ff0000"/><rect x="1105" y="298" width="1" height="4" fill="#ff0000"/><rect x="1103" y="296" width="5" height="2" fill="#ff0000"/><rect x="1110.5" y="241.5" width="4" height="54" fill="none" stroke="#ff0000" stroke-width="1"/><rect x="1119" y="135" width="1" height="17" fill="#ff0000"/><rect x="1117.5" y="152.5" width="4" height="88" fill="none" stroke="#ff0000" stroke-width="1"/><rect x="1126" y="151" width="1" height="19" fill="#ff0000"/><rect x="1124.5" y="112.5" width="4" height="38" fill="none" stroke="#ff0000" stroke-width="1"/><rect x="1131" y="112" width="5" height="1" fill="#ff0000"/><rect x="1138" y="112" width="5" height="1" fill="#ff0000"/><rect x="1145" y="112" width="5" height="1" fill="#ff0000"/><rect x="1234" y="365" width="1" height="1" fill="#ff0000"/><rect x="1234" y="367" width="1" height="2" fill="#ff0000"/><rect x="1232" y="366" width="5" height="1" fill="#ff0000"/><rect x="1241" y="366" width="1" height="7" fill="#ff0000"/><rect x="1239" y="365" width="5" height="1" fill="#ff0000"/><rect x="1248" y="364" width="1" height="4" fill="#ff0000"/><rect x="1246.5" y="361.5" width="4" height="2" fill="none" stroke="#ff0000" stroke-width="1"/><rect x="1255" y="359" width="1" height="2" fill="#54ffff"/><rect x="1253" y="361" width="5" height="4" fill="#54ffff"/><rect x="1260" y="365" width="5" height="1" fill="#ff0000"/><rect x="1269" y="359" width="1" height="3" fill="#ff0000"/><rect x="1269" y="363" width="1" height="5" fill="#ff0000"/><rect x="1267" y="362" width="5" height="1" fill="#ff0000"/><rect x="1274" y="361" width="5" height="1" fill="#ff0000"/><rect x="1283" y="362" width="1" height="1" fill="#ff0000"/><rect x="1281" y="361" width="5" height="1" fill="#ff0000"/><rect x="1290" y="361" width="1" height="1" fill="#ff0000"/><rect x="1288" y="362" width="5" height="1" fill="#ff0000"/><rect x="1297" y="358" width="1" height="3" fill="#54ffff"/><rect x="1297" y="366" width="1" height="6" fill="#54ffff"/><rect x="1295" y="361" width="5" height="5" fill="#54ffff"/><rect x="1304" y="369" width="1" height="1" fill="#ff0000"/><rect x="1302" y="368" width="5" height="1" fill="#ff0000"/><rect x="1311" y="366" width="1" height="3" fill="#ff0000"/><rect x="1309.5" y="364.5" width="4" height="1" fill="none" stroke="#ff0000" stroke-width="1"/><rect x="1316.5" y="337.5" width="4" height="24" fill="none" stroke="#ff0000" stroke-width="1"/><rect x="1325" y="332" width="1" height="1" fill="#ff0000"/><rect x="1325" y="339" width="1" height="5" fill="#ff0000"/><rect x="1323.5" y="333.5" width="4" height="5" fill="none" stroke="#ff0000" stroke-width="1"/><rect x="1332" y="339" width="1" height="1" fill="#54ffff"/><rect x="1330" y="333" width="5" height="6" fill="#54ffff"/><rect x="1339" y="344" width="1" height="5" fill="#54ffff"/><rect x="1337" y="337" width="5" height="7" fill="#54ffff"/><rect x="1346" y="343" width="1" height="2" fill="#54ffff"/><rect x="1346" y="350" width="1" height="2" fill="#54ffff"/><rect x="1344" y="345" width="5" height="5" fill="#54ffff"/><rect x="1353" y="331" width="1" height="2" fill="#ff0000"/><rect x="1353" y="348" width="1" height="1" fill="#ff0000"/><rect x="1351.5" y="333.5" width="4" height="14" fill="none" stroke="#ff0000" stroke-width="1"/><rect x="1360" y="335" width="1" height="4" fill="#54ffff"/><rect x="1358" y="334" width="5" height="1" fill="#54ffff"/><rect x="1367" y="338" width="1" height="1" fill="#54ffff"/><rect x="1365" y="334" width="5" height="4" fill="#54ffff"/><rect x="1374" y="335" width="1" height="3" fill="#ff0000"/><rect x="1372" y="338" width="5" height="1" fill="#ff0000"/><rect x="1381" y="327" width="1" height="4" fill="#ff0000"/><rect x="1379.5" y="331.5" width="4" height="10" fill="none" stroke="#ff0000" stroke-width="1"/><rect x="1388" y="329" width="1" height="1" fill="#ff0000"/><rect x="1388" y="331" width="1" height="9" fill="#ff0000"/><rect x="1386" y="330" width="5" height="1" fill="#ff0000"/><rect x="1395" y="328" width="1" height="2" fill="#54ffff"/><rect x="1395" y="332" width="1" height="2" fill="#54ffff"/><rect x="1393" y="330" width="5" height="2" fill="#54ffff"/><rect x="1402" y="335" width="1" height="2" fill="#54ffff"/><rect x="1400" y="332" width="5" height="3" fill="#54ffff"/><rect x="1409" y="330" width="1" height="5" fill="#54ffff"/><rect x="1407" y="335" width="5" height="10" fill="#54ffff"/><rect x="1414" y="345" width="5" height="4" fill="#54ffff"/><rect x="1423" y="346" width="1" height="1" fill="#ff0000"/><rect x="1423" y="348" width="1" height="1" fill="#ff0000"/><rect x="1421" y="347" width="5" height="1" fill="#ff0000"/><rect x="1430" y="340" width="1" height="3" fill="#ff0000"/><rect x="1430" y="348" width="1" height="1" fill="#ff0000"/><rect x="1428.5" y="343.5" width="4" height="4" fill="none" stroke="#ff0000" stroke-width="1"/><rect x="1437" y="310" width="1" height="22" fill="#ff0000"/><rect x="1437" y="342" width="1" height="3" fill="#ff0000"/><rect x="1435.5" y="332.5" width="4" height="9" fill="none" stroke="#ff0000" stroke-width="1"/><rect x="1444" y="327" width="1" height="4" fill="#ff0000"/><rect x="1442" y="331" width="5" height="1" fill="#ff0000"/><rect x="1451" y="331" width="1" height="3" fill="#54ffff"/><rect x="1449" y="330" width="5" height="1" fill="#54ffff"/><rect x="1458" y="328" width="1" height="3" fill="#ff0000"/><rect x="1458" y="332" width="1" height="1" fill="#ff0000"/><rect x="1456" y="331" width="5" height="1" fill="#ff0000"/><rect x="1465" y="333" width="1" height="1" fill="#54ffff"/><rect x="1465" y="338" width="1" height="4" fill="#54ffff"/><rect x="1463" y="334" width="5" height="4" fill="#54ffff"/><rect x="1470" y="339" width="5" height="2" fill="#54ffff"/><rect x="1479" y="341" width="1" height="1" fill="#54ffff"/><rect x="1479" y="344" width="1" height="2" fill="#54ffff"/><rect x="1477" y="342" width="5" height="2" fill="#54ffff"/><rect x="1484.5" y="343.5" width="4" height="1" fill="none" stroke="#ff0000" stroke-width="1"/><rect x="1493" y="339" width="1" height="2" fill="#54ffff"/><rect x="1493" y="342" width="1" height="3" fill="#54ffff"/><rect x="1491" y="341" width="5" height="1" fill="#54ffff"/><rect x="1500" y="338" width="1" height="1" fill="#ff0000"/><rect x="1498" y="339" width="5" height="2" fill="#ff0000"/><rect x="1507" y="341" width="1" height="1" fill="#ff0000"/><rect x="1505" y="342" width="5" height="1" fill="#ff0000"/><rect x="1514" y="341" width="1" height="1" fill="#ff0000"/><rect x="1512" y="342" width="5" height="1" fill="#ff0000"/><rect x="1521" y="338" width="1" height="1" fill="#54ffff"/><rect x="1521" y="340" width="1" height="14" fill="#54ffff"/><rect x="1519" y="339" width="5" height="1" fill="#54ffff"/><rect x="1528" y="297" width="1" height="8" fill="#ff0000"/><rect x="1528" y="337" width="1" height="3" fill="#ff0000"/><rect x="1526.5" y="305.5" width="4" height="31" fill="none" stroke="#ff0000" stroke-width="1"/><rect x="1535" y="304" width="1" height="1" fill="#54ffff"/><rect x="1535" y="308" width="1" height="8" fill="#54ffff"/><rect x="1533" y="305" width="5" height="3" fill="#54ffff"/><rect x="1542" y="306" width="1" height="3" fill="#54ffff"/><rect x="1542" y="310" width="1" height="4" fill="#54ffff"/><rect x="1540" y="309" width="5" height="1" fill="#54ffff"/><rect x="1549" y="275" width="1" height="9" fill="#ff0000"/><rect x="1549" y="318" width="1" height="4" fill="#ff0000"/><rect x="1547.5" y="284.5" width="4" height="33" fill="none" stroke="#ff0000" stroke-width="1"/><rect x="1556" y="275" width="1" height="7" fill="#ff0000"/><rect x="1556" y="283" width="1" height="11" fill="#ff0000"/><rect x="1554" y="282" width="5" height="1" fill="#ff0000"/><rect x="1563" y="135" width="1" height="13" fill="#ff0000"/><rect x="1563" y="280" width="1" height="9" fill="#ff0000"/><rect x="1561.5" y="148.5" width="4" height="131" fill="none" stroke="#ff0000" stroke-width="1"/><rect x="1570" y="148" width="1" height="17" fill="#ff0000"/><rect x="1568.5" y="112.5" width="4" height="35" fill="none" stroke="#ff0000" stroke-width="1"/></g><rect x="357.5" y="454.5" width="4" height="3" fill="none" stroke="#ff0000" stroke-width="1"/><rect x="364" y="456" width="5" height="2" fill="#54ffff"/><rect x="371" y="456" width="5" height="2" fill="#54ffff"/><rect x="378.5" y="448.5" width="4" height="9" fill="none" stroke="#ff0000" stroke-width="1"/><rect x="385" y="452" width="5" height="6" fill="#54ffff"/><rect x="392" y="453" width="5" height="5" fill="#54ffff"/><rect x="399.5" y="454.5" width="4" height="3" fill="none" stroke="#ff0000" stroke-width="1"/><rect x="406" y="453" width="5" height="5" fill="#54ffff"/><rect x="413.5" y="450.5" width="4" height="7" fill="none" stroke="#ff0000" stroke-width="1"/><rect x="420.5" y="450.5" width="4" height="7" fill="none" stroke="#ff0000" stroke-width="1"/><rect x="427.5" y="450.5" width="4" height="7" fill="none" stroke="#ff0000" stroke-width="1"/><rect x="434.5" y="451.5" width="4" height="6" fill="none" stroke="#ff0000" stroke-width="1"/><rect x="441.5" y="443.5" width="4" height="14" fill="none" stroke="#ff0000" stroke-width="1"/><rect x="448.5" y="443.5" width="4" height="14" fill="none" stroke="#ff0000" stroke-width="1"/><rect x="455" y="447" width="5" height="11" fill="#54ffff"/><rect x="462.5" y="444.5" width="4" height="13" fill="none" stroke="#ff0000" stroke-width="1"/><rect x="469.5" y="451.5" width="4" height="6" fill="none" stroke="#ff0000" stroke-width="1"/><rect x="476" y="451" width="5" height="7" fill="#54ffff"/><rect x="483.5" y="453.5" width="4" height="4" fill="none" stroke="#ff0000" stroke-width="1"/><rect x="490" y="446" width="5" height="12" fill="#54ffff"/><rect x="497" y="453" width="5" height="5" fill="#54ffff"/><rect x="504.5" y="454.5" width="4" height="3" fill="none" stroke="#ff0000" stroke-width="1"/><rect x="511" y="453" width="5" height="5" fill="#54ffff"/><rect x="518" y="455" width="5" height="3" fill="#54ffff"/><rect x="525" y="456" width="5" height="2" fill="#54ffff"/><rect x="532.5" y="455.5" width="4" height="2" fill="none" stroke="#ff0000" stroke-width="1"/><rect x="539" y="456" width="5" height="2" fill="#ff0000"/><rect x="546" y="456" width="5" height="2" fill="#54ffff"/><rect x="553" y="456" width="5" height="2" fill="#54ffff"/><rect x="560" y="456" width="5" height="2" fill="#54ffff"/><rect x="567" y="456" width="5" height="2" fill="#ff0000"/><rect x="574.5" y="454.5" width="4" height="3" fill="none" stroke="#ff0000" stroke-width="1"/><rect x="581" y="456" width="5" height="2" fill="#54ffff"/><rect x="588.5" y="450.5" width="4" height="7" fill="none" stroke="#ff0000" stroke-width="1"/><rect x="595.5" y="443.5" width="4" height="14" fill="none" stroke="#ff0000" stroke-width="1"/><rect x="602.5" y="441.5" width="4" height="16" fill="none" stroke="#ff0000" stroke-width="1"/><rect x="609.5" y="416.5" width="4" height="41" fill="none" stroke="#ff0000" stroke-width="1"/><rect x="616.5" y="434.5" width="4" height="23" fill="none" stroke="#ff0000" stroke-width="1"/><rect x="623.5" y="428.5" width="4" height="29" fill="none" stroke="#ff0000" stroke-width="1"/><rect x="630.5" y="377.5" width="4" height="80" fill="none" stroke="#ff0000" stroke-width="1"/><rect x="637.5" y="430.5" width="4" height="27" fill="none" stroke="#ff0000" stroke-width="1"/><rect x="644.5" y="453.5" width="4" height="4" fill="none" stroke="#ff0000" stroke-width="1"/><rect x="651.5" y="454.5" width="4" height="3" fill="none" stroke="#ff0000" stroke-width="1"/><rect x="658" y="456" width="5" height="2" fill="#ff0000"/><rect x="665.5" y="454.5" width="4" height="3" fill="none" stroke="#ff0000" stroke-width="1"/><rect x="672.5" y="453.5" width="4" height="4" fill="none" stroke="#ff0000" stroke-width="1"/><rect x="679.5" y="454.5" width="4" height="3" fill="none" stroke="#ff0000" stroke-width="1"/><rect x="686.5" y="455.5" width="4" height="2" fill="none" stroke="#ff0000" stroke-width="1"/><rect x="693.5" y="454.5" width="4" height="3" fill="none" stroke="#ff0000" stroke-width="1"/><rect x="700.5" y="455.5" width="4" height="2" fill="none" stroke="#ff0000" stroke-width="1"/><rect x="707" y="456" width="5" height="2" fill="#ff0000"/><rect x="795" y="454" width="5" height="4" fill="#54ffff"/><rect x="802" y="457" width="5" height="1" fill="#ff0000"/><rect x="809" y="457" width="5" height="1" fill="#ff0000"/><rect x="816" y="456" width="5" height="2" fill="#54ffff"/><rect x="823" y="456" width="5" height="2" fill="#ff0000"/><rect x="830" y="457" width="5" height="1" fill="#ff0000"/><rect x="837" y="457" width="5" height="1" fill="#54ffff"/><rect x="844" y="457" width="5" height="1" fill="#ff0000"/><rect x="851" y="457" width="5" height="1" fill="#54ffff"/><rect x="858" y="457" width="5" height="1" fill="#54ffff"/><rect x="865" y="457" width="5" height="1" fill="#ff0000"/><rect x="872" y="456" width="5" height="2" fill="#ff0000"/><rect x="879" y="457" width="5" height="1" fill="#54ffff"/><rect x="886" y="457" width="5" height="1" fill="#ff0000"/><rect x="893" y="457" width="5" height="1" fill="#54ffff"/><rect x="900" y="457" width="5" height="1" fill="#ff0000"/><rect x="907" y="457" width="5" height="1" fill="#ff0000"/><rect x="914" y="455" width="5" height="3" fill="#54ffff"/><rect x="921.5" y="454.5" width="4" height="3" fill="none" stroke="#ff0000" stroke-width="1"/><rect x="928" y="453" width="5" height="5" fill="#54ffff"/><rect x="935" y="453" width="5" height="5" fill="#54ffff"/><rect x="942.5" y="453.5" width="4" height="4" fill="none" stroke="#ff0000" stroke-width="1"/><rect x="949.5" y="454.5" width="4" height="3" fill="none" stroke="#ff0000" stroke-width="1"/><rect x="956.5" y="434.5" width="4" height="23" fill="none" stroke="#ff0000" stroke-width="1"/><rect x="963.5" y="444.5" width="4" height="13" fill="none" stroke="#ff0000" stroke-width="1"/><rect x="970" y="439" width="5" height="19" fill="#54ffff"/><rect x="977.5" y="454.5" width="4" height="3" fill="none" stroke="#ff0000" stroke-width="1"/><rect x="984" y="454" width="5" height="4" fill="#54ffff"/><rect x="991" y="455" width="5" height="3" fill="#54ffff"/><rect x="998" y="456" width="5" height="2" fill="#ff0000"/><rect x="1005.5" y="454.5" width="4" height="3" fill="none" stroke="#ff0000" stroke-width="1"/><rect x="1012" y="455" width="5" height="3" fill="#54ffff"/><rect x="1019" y="456" width="5" height="2" fill="#ff0000"/><rect x="1026" y="454" width="5" height="4" fill="#54ffff"/><rect x="1033.5" y="453.5" width="4" height="4" fill="none" stroke="#ff0000" stroke-width="1"/><rect x="1040.5" y="446.5" width="4" height="11" fill="none" stroke="#ff0000" stroke-width="1"/><rect x="1047.5" y="448.5" width="4" height="9" fill="none" stroke="#ff0000" stroke-width="1"/><rect x="1054.5" y="441.5" width="4" height="16" fill="none" stroke="#ff0000" stroke-width="1"/><rect x="1061.5" y="430.5" width="4" height="27" fill="none" stroke="#ff0000" stroke-width="1"/><rect x="1068.5" y="440.5" width="4" height="17" fill="none" stroke="#ff0000" stroke-width="1"/><rect x="1075" y="444" width="5" height="14" fill="#54ffff"/><rect x="1082" y="451" width="5" height="7" fill="#54ffff"/><rect x="1089.5" y="454.5" width="4" height="3" fill="none" stroke="#ff0000" stroke-width="1"/><rect x="1096" y="454" width="5" height="4" fill="#54ffff"/><rect x="1103.5" y="453.5" width="4" height="4" fill="none" stroke="#ff0000" stroke-width="1"/><rect x="1110.5" y="430.5" width="4" height="27" fill="none" stroke="#ff0000" stroke-width="1"/><rect x="1117.5" y="390.5" width="4" height="67" fill="none" stroke="#ff0000" stroke-width="1"/><rect x="1124.5" y="377.5" width="4" height="80" fill="none" stroke="#ff0000" stroke-width="1"/><rect x="1131.5" y="451.5" width="4" height="6" fill="none" stroke="#ff0000" stroke-width="1"/><rect x="1138.5" y="451.5" width="4" height="6" fill="none" stroke="#ff0000" stroke-width="1"/><rect x="1145.5" y="453.5" width="4" height="4" fill="none" stroke="#ff0000" stroke-width="1"/><rect x="1232.5" y="451.5" width="4" height="6" fill="none" stroke="#ff0000" stroke-width="1"/><rect x="1239.5" y="451.5" width="4" height="6" fill="none" stroke="#ff0000" stroke-width="1"/><rect x="1246.5" y="453.5" width="4" height="4" fill="none" stroke="#ff0000" stroke-width="1"/><rect x="1253" y="453" width="5" height="5" fill="#54ffff"/><rect x="1260" y="456" width="5" height="2" fill="#ff0000"/><rect x="1267.5" y="454.5" width="4" height="3" fill="none" stroke="#ff0000" stroke-width="1"/><rect x="1274.5" y="455.5" width="4" height="2" fill="none" stroke="#ff0000" stroke-width="1"/><rect x="1281.5" y="454.5" width="4" height="3" fill="none" stroke="#ff0000" stroke-width="1"/><rect x="1288" y="454" width="5" height="4" fill="#54ffff"/><rect x="1295" y="450" width="5" height="8" fill="#54ffff"/><rect x="1302" y="456" width="5" height="2" fill="#ff0000"/><rect x="1309.5" y="454.5" width="4" height="3" fill="none" stroke="#ff0000" stroke-width="1"/><rect x="1316.5" y="438.5" width="4" height="19" fill="none" stroke="#ff0000" stroke-width="1"/><rect x="1323.5" y="442.5" width="4" height="15" fill="none" stroke="#ff0000" stroke-width="1"/><rect x="1330" y="454" width="5" height="4" fill="#54ffff"/><rect x="1337" y="452" width="5" height="6" fill="#54ffff"/><rect x="1344" y="453" width="5" height="5" fill="#54ffff"/><rect x="1351" y="442" width="5" height="16" fill="#54ffff"/><rect x="1358.5" y="452.5" width="4" height="5" fill="none" stroke="#ff0000" stroke-width="1"/><rect x="1365" y="452" width="5" height="6" fill="#54ffff"/><rect x="1372" y="452" width="5" height="6" fill="#54ffff"/><rect x="1379.5" y="446.5" width="4" height="11" fill="none" stroke="#ff0000" stroke-width="1"/><rect x="1386.5" y="451.5" width="4" height="6" fill="none" stroke="#ff0000" stroke-width="1"/><rect x="1393" y="454" width="5" height="4" fill="#54ffff"/><rect x="1400" y="451" width="5" height="7" fill="#54ffff"/><rect x="1407" y="449" width="5" height="9" fill="#54ffff"/><rect x="1414" y="453" width="5" height="5" fill="#54ffff"/><rect x="1421.5" y="454.5" width="4" height="3" fill="none" stroke="#ff0000" stroke-width="1"/><rect x="1428.5" y="453.5" width="4" height="4" fill="none" stroke="#ff0000" stroke-width="1"/><rect x="1435.5" y="430.5" width="4" height="27" fill="none" stroke="#ff0000" stroke-width="1"/><rect x="1442.5" y="454.5" width="4" height="3" fill="none" stroke="#ff0000" stroke-width="1"/><rect x="1449" y="452" width="5" height="6" fill="#54ffff"/><rect x="1456.5" y="450.5" width="4" height="7" fill="none" stroke="#ff0000" stroke-width="1"/><rect x="1463" y="446" width="5" height="12" fill="#54ffff"/><rect x="1470" y="451" width="5" height="7" fill="#54ffff"/><rect x="1477" y="452" width="5" height="6" fill="#54ffff"/><rect x="1484.5" y="453.5" width="4" height="4" fill="none" stroke="#ff0000" stroke-width="1"/><rect x="1491" y="453" width="5" height="5" fill="#54ffff"/><rect x="1498" y="456" width="5" height="2" fill="#ff0000"/><rect x="1505" y="455" width="5" height="3" fill="#54ffff"/><rect x="1512.5" y="454.5" width="4" height="3" fill="none" stroke="#ff0000" stroke-width="1"/><rect x="1519" y="444" width="5" height="14" fill="#54ffff"/><rect x="1526.5" y="411.5" width="4" height="46" fill="none" stroke="#ff0000" stroke-width="1"/><rect x="1533" y="449" width="5" height="9" fill="#54ffff"/><rect x="1540" y="448" width="5" height="10" fill="#54ffff"/><rect x="1547.5" y="406.5" width="4" height="51" fill="none" stroke="#ff0000" stroke-width="1"/><rect x="1554.5" y="426.5" width="4" height="31" fill="none" stroke="#ff0000" stroke-width="1"/><rect x="1561.5" y="377.5" width="4" height="80" fill="none" stroke="#ff0000" stroke-width="1"/><rect x="1568.5" y="378.5" width="4" height="79" fill="none" stroke="#ff0000" stroke-width="1"/><g clip-path="url(#cp2)"><rect x="357.5" y="729.5" width="4" height="18" fill="none" stroke="#ff0000" stroke-width="1"/><rect x="366" y="710" width="1" height="11" fill="#ff0000"/><rect x="366" y="728" width="1" height="10" fill="#ff0000"/><rect x="364.5" y="721.5" width="4" height="6" fill="none" stroke="#ff0000" stroke-width="1"/><rect x="373" y="694" width="1" height="17" fill="#ff0000"/><rect x="373" y="740" width="1" height="1" fill="#ff0000"/><rect x="371.5" y="711.5" width="4" height="28" fill="none" stroke="#ff0000" stroke-width="1"/><rect x="380" y="702" width="1" height="4" fill="#ff0000"/><rect x="380" y="712" width="1" height="6" fill="#ff0000"/><rect x="378.5" y="706.5" width="4" height="5" fill="none" stroke="#ff0000" stroke-width="1"/><rect x="387" y="696" width="1" height="6" fill="#54ffff"/><rect x="387" y="709" width="1" height="6" fill="#54ffff"/><rect x="385" y="702" width="5" height="7" fill="#54ffff"/><rect x="394" y="728" width="1" height="4" fill="#54ffff"/><rect x="392" y="707" width="5" height="21" fill="#54ffff"/><rect x="401" y="722" width="1" height="2" fill="#54ffff"/><rect x="401" y="739" width="1" height="4" fill="#54ffff"/><rect x="399" y="724" width="5" height="15" fill="#54ffff"/><rect x="408" y="730" width="1" height="5" fill="#54ffff"/><rect x="408" y="737" width="1" height="6" fill="#54ffff"/><rect x="406" y="735" width="5" height="2" fill="#54ffff"/><rect x="415" y="726" width="1" height="3" fill="#ff0000"/><rect x="415" y="737" width="1" height="9" fill="#ff0000"/><rect x="413.5" y="729.5" width="4" height="7" fill="none" stroke="#ff0000" stroke-width="1"/><rect x="422" y="713" width="1" height="10" fill="#ff0000"/><rect x="422" y="732" width="1" height="2" fill="#ff0000"/><rect x="420.5" y="723.5" width="4" height="8" fill="none" stroke="#ff0000" stroke-width="1"/><rect x="429" y="716" width="1" height="10" fill="#ff0000"/><rect x="427" y="726" width="5" height="2" fill="#ff0000"/><rect x="436" y="722" width="1" height="4" fill="#54ffff"/><rect x="436" y="738" width="1" height="3" fill="#54ffff"/><rect x="434" y="726" width="5" height="12" fill="#54ffff"/><rect x="443" y="732" width="1" height="2" fill="#ff0000"/><rect x="443" y="738" width="1" height="7" fill="#ff0000"/><rect x="441.5" y="734.5" width="4" height="3" fill="none" stroke="#ff0000" stroke-width="1"/><rect x="450" y="729" width="1" height="2" fill="#ff0000"/><rect x="450" y="736" width="1" height="4" fill="#ff0000"/><rect x="448.5" y="731.5" width="4" height="4" fill="none" stroke="#ff0000" stroke-width="1"/><rect x="457" y="708" width="1" height="1" fill="#ff0000"/><rect x="457" y="729" width="1" height="17" fill="#ff0000"/><rect x="455.5" y="709.5" width="4" height="19" fill="none" stroke="#ff0000" stroke-width="1"/><rect x="464" y="703" width="1" height="8" fill="#54ffff"/><rect x="464" y="723" width="1" height="2" fill="#54ffff"/><rect x="462" y="711" width="5" height="12" fill="#54ffff"/><rect x="471" y="703" width="1" height="7" fill="#ff0000"/><rect x="471" y="720" width="1" height="1" fill="#ff0000"/><rect x="469.5" y="710.5" width="4" height="9" fill="none" stroke="#ff0000" stroke-width="1"/><rect x="478" y="698" width="1" height="9" fill="#ff0000"/><rect x="478" y="713" width="1" height="1" fill="#ff0000"/><rect x="476.5" y="707.5" width="4" height="5" fill="none" stroke="#ff0000" stroke-width="1"/><rect x="485" y="702" width="1" height="5" fill="#54ffff"/><rect x="485" y="713" width="1" height="8" fill="#54ffff"/><rect x="483" y="707" width="5" height="6" fill="#54ffff"/><rect x="492" y="681" width="1" height="22" fill="#ff0000"/><rect x="492" y="714" width="1" height="6" fill="#ff0000"/><rect x="490.5" y="703.5" width="4" height="10" fill="none" stroke="#ff0000" stroke-width="1"/><rect x="499" y="704" width="1" height="1" fill="#54ffff"/><rect x="499" y="714" width="1" height="4" fill="#54ffff"/><rect x="497" y="705" width="5" height="9" fill="#54ffff"/><rect x="506" y="708" width="1" height="4" fill="#54ffff"/><rect x="506" y="713" width="1" height="3" fill="#54ffff"/><rect x="504" y="712" width="5" height="1" fill="#54ffff"/><rect x="513" y="669" width="1" height="12" fill="#ff0000"/><rect x="513" y="708" width="1" height="18" fill="#ff0000"/><rect x="511.5" y="681.5" width="4" height="26" fill="none" stroke="#ff0000" stroke-width="1"/><rect x="520" y="690" width="1" height="3" fill="#ff0000"/><rect x="518.5" y="484.5" width="4" height="205" fill="none" stroke="#ff0000" stroke-width="1"/><rect x="797" y="708" width="1" height="11" fill="#ff0000"/><rect x="795.5" y="719.5" width="4" height="26" fill="none" stroke="#ff0000" stroke-width="1"/><rect x="804" y="692" width="1" height="47" fill="#54ffff"/><rect x="804" y="740" width="1" height="3" fill="#54ffff"/><rect x="802" y="739" width="5" height="1" fill="#54ffff"/><rect x="811" y="711" width="1" height="22" fill="#54ffff"/><rect x="811" y="736" width="1" height="7" fill="#54ffff"/><rect x="809" y="733" width="5" height="3" fill="#54ffff"/><rect x="818" y="701" width="1" height="8" fill="#ff0000"/><rect x="818" y="735" width="1" height="1" fill="#ff0000"/><rect x="816.5" y="709.5" width="4" height="25" fill="none" stroke="#ff0000" stroke-width="1"/><rect x="825" y="680" width="1" height="31" fill="#ff0000"/><rect x="825" y="712" width="1" height="12" fill="#ff0000"/><rect x="823" y="711" width="5" height="1" fill="#ff0000"/><rect x="832" y="706" width="1" height="18" fill="#ff0000"/><rect x="830.5" y="484.5" width="4" height="221" fill="none" stroke="#ff0000" stroke-width="1"/><rect x="1234" y="690" width="1" height="15" fill="#ff0000"/><rect x="1232.5" y="705.5" width="4" height="37" fill="none" stroke="#ff0000" stroke-width="1"/><rect x="1241" y="709" width="1" height="13" fill="#ff0000"/><rect x="1239.5" y="484.5" width="4" height="224" fill="none" stroke="#ff0000" stroke-width="1"/></g><rect x="518.5" y="753.5" width="4" height="40" fill="none" stroke="#ff0000"/><rect x="830.5" y="751.5" width="4" height="40" fill="none" stroke="#ff0000"/><rect x="1232.5" y="769.5" width="4" height="40" fill="none" stroke="#ff0000"/><rect x="1239.5" y="748.5" width="4" height="40" fill="none" stroke="#ff0000"/></g><g shape-rendering="crispEdges" clip-path="url(#cp1)"><polyline points="359.4,373.5 412.5,369.4 475.0,359.4 512.5,352.5 540.0,348.0 540.0,347.6 572.5,344.4 598.5,341.1 618.0,335.3 637.6,326.5 670.1,307.0 708.5,284.9" fill="none" stroke="#02e2f4" stroke-width="1" stroke-linejoin="round"/><polyline points="359.4,354.8 427.5,354.8 440.0,351.2 475.0,343.1 512.5,334.4 540.0,328.1 540.0,327.5 572.5,324.2 598.5,320.0 618.0,308.6 634.3,285.9 650.6,259.8 670.1,230.6 689.6,201.3 708.5,173.7" fill="none" stroke="#ff80ff" stroke-width="1" stroke-linejoin="round"/><polyline points="359.4,355.2 437.5,354.4 475.0,347.5 512.5,341.2 540.0,337.9 540.0,337.2 572.5,333.0 598.5,326.5 618.0,315.1 627.8,307.0 637.6,295.6 708.5,224.7" fill="none" stroke="#00e600" stroke-width="1" stroke-linejoin="round"/><polyline points="359.4,353.5 377.5,353.5 384.4,354.2 391.2,356.0 400.0,357.0 417.5,357.0 425.0,354.4 436.2,348.8 442.5,340.0 450.0,333.1 457.5,327.5 464.4,322.5 470.6,317.5 478.5,317.2 485.4,318.5 492.5,318.8 499.4,322.2 506.5,324.0 513.4,324.0 520.4,325.6 527.2,326.5 534.4,325.6 541.2,325.0 550.0,324.8 559.5,323.6 575.8,322.9 588.8,321.6 598.5,315.1 608.3,295.6 618.0,266.3 625.2,227.3 632.7,188.3 640.8,155.8 651.5,125.9 653.8,118.4" fill="none" stroke="#ffffff" stroke-width="1" stroke-linejoin="round"/><polyline points="359.4,354.2 391.2,354.2 405.0,356.2 420.0,356.2 431.2,355.0 440.0,351.9 450.0,345.0 464.4,336.9 471.2,331.9 485.4,325.0 492.5,322.8 499.4,321.2 506.5,320.4 517.5,320.4 525.0,322.5 534.4,323.8 550.0,324.4 559.5,322.9 575.8,322.9 588.8,322.3 605.0,311.9 618.0,295.6 627.8,272.8 637.6,243.6 650.6,201.3 663.6,162.3 676.6,136.3 683.1,125.9 686.3,118.4" fill="none" stroke="#ffff00" stroke-width="1" stroke-linejoin="round"/><polyline points="797.0,355.5 801.0,355.5 802.0,357.0 918.0,357.6 920.0,357.8 968.8,355.4 1001.3,352.1 1050.1,350.5 1082.6,346.4 1111.9,341.5 1123.3,335.9 1146.8,323.2" fill="none" stroke="#02e2f4" stroke-width="1" stroke-linejoin="round"/><polyline points="797.0,356.5 801.0,357.5 815.0,357.8 850.0,360.5 918.0,360.5 920.0,359.4 959.0,357.8 985.0,351.3 1021.6,344.0 1050.1,336.7 1070.4,326.9 1091.5,318.0 1105.4,315.5 1115.1,309.0 1129.8,286.3 1141.0,270.0 1146.6,260.0" fill="none" stroke="#ff80ff" stroke-width="1" stroke-linejoin="round"/><polyline points="797.0,353.3 808.0,353.3 809.0,354.5 815.0,354.5 816.0,355.5 829.0,355.5 836.0,356.5 850.0,356.5 860.0,357.5 918.0,358.5 920.0,359.1 968.8,357.0 1001.3,351.3 1050.1,344.0 1082.6,334.2 1103.7,329.3 1111.9,325.3 1123.3,313.9 1146.8,284.6" fill="none" stroke="#00e600" stroke-width="1" stroke-linejoin="round"/><polyline points="796.0,363.0 815.0,363.2 822.0,362.0 828.0,360.5 850.0,359.5 918.0,360.0 920.0,360.2 936.3,363.5 951.7,363.5 958.5,355.4 972.4,339.9 986.3,325.6 1000.5,326.6 1021.6,326.6 1050.1,326.6 1056.6,322.0 1070.4,309.0 1077.4,304.1 1089.1,299.3 1105.4,298.9 1112.4,288.0 1116.7,270.0 1122.4,247.0 1129.5,204.0 1136.6,161.0 1139.4,150.0 1147.5,119.4" fill="none" stroke="#ffffff" stroke-width="1" stroke-linejoin="round"/><polyline points="797.0,361.5 850.0,361.5 860.0,360.0 875.0,358.7 900.0,358.5 918.0,359.0 920.0,358.6 952.5,361.9 962.3,355.4 985.0,344.8 1007.5,332.6 1017.6,327.7 1033.8,326.1 1050.1,326.1 1063.1,320.4 1077.4,315.5 1091.5,310.3 1105.4,304.1 1112.4,296.0 1120.0,280.0 1129.5,251.6 1139.0,223.0 1147.5,203.0" fill="none" stroke="#ffff00" stroke-width="1" stroke-linejoin="round"/><polyline points="1318.5,353.5 1345.0,352.2 1365.0,351.5 1483.6,351.8 1521.6,349.5 1542.6,346.5 1556.5,343.5 1570.3,337.2" fill="none" stroke="#02e2f4" stroke-width="1" stroke-linejoin="round"/><polyline points="1234.4,357.5 1290.5,357.5 1297.5,359.4 1318.5,360.0 1345.0,358.1 1365.0,354.8 1381.5,351.1 1404.0,345.8 1419.0,344.3 1440.1,343.5 1456.6,337.5 1486.6,337.5 1503.1,337.5 1521.6,339.0 1542.6,333.0 1556.5,328.5 1563.1,318.0 1570.3,308.3" fill="none" stroke="#ff80ff" stroke-width="1" stroke-linejoin="round"/><polyline points="1234.4,355.2 1245.0,356.9 1270.0,358.5 1318.5,358.8 1332.5,356.2 1365.0,354.8 1389.0,352.3 1419.0,351.1 1449.1,346.5 1472.5,342.8 1507.6,339.8 1521.6,339.0 1542.6,334.5 1556.5,331.5 1570.3,319.2" fill="none" stroke="#00e600" stroke-width="1" stroke-linejoin="round"/><polyline points="1234.4,362.2 1241.5,364.4 1257.5,365.6 1270.0,363.1 1290.5,361.0 1304.5,361.9 1318.5,360.6 1325.5,352.5 1337.5,343.8 1346.5,341.2 1353.5,340.2 1365.0,340.2 1371.0,340.2 1385.3,334.5 1404.0,334.5 1419.0,339.3 1430.4,343.2 1440.1,342.0 1451.5,336.0 1461.1,333.0 1472.5,336.0 1483.6,340.2 1507.6,342.8 1521.6,340.5 1528.6,334.5 1542.6,319.5 1549.6,307.5 1556.5,297.0 1560.9,279.0 1562.4,270.0 1566.0,250.0 1570.4,228.6" fill="none" stroke="#ffffff" stroke-width="1" stroke-linejoin="round"/><polyline points="1234.4,357.5 1245.0,359.4 1257.5,362.2 1290.5,362.8 1311.5,362.5 1318.5,360.0 1331.2,354.4 1345.0,352.5 1357.5,348.1 1365.0,345.6 1374.0,341.3 1385.3,337.5 1411.5,337.5 1430.4,339.3 1451.5,337.5 1472.5,339.0 1486.6,338.3 1503.1,337.8 1521.6,339.8 1535.5,334.5 1546.6,328.5 1556.5,319.5 1563.6,300.0 1570.6,278.3" fill="none" stroke="#ffff00" stroke-width="1" stroke-linejoin="round"/></g><g shape-rendering="crispEdges"><polyline points="359.4,455.5 375.0,455.5 381.2,453.2 391.2,452.0 411.2,452.0 431.2,450.8 450.0,447.6 462.5,444.5 470.0,445.1 487.5,449.5 500.0,451.4 525.0,454.5 550.0,455.1 550.0,455.1 590.0,454.5 605.0,448.2 615.0,439.5 625.0,433.2 632.5,419.5 639.5,417.6 646.5,424.5 653.5,427.6 660.5,433.9 667.5,449.5 674.5,453.2 681.5,454.5 708.1,454.5" fill="none" stroke="#ffff00" stroke-width="1" stroke-linejoin="round"/><polyline points="359.4,455.1 375.0,455.1 378.8,453.9 412.5,453.9 437.5,452.0 453.8,450.8 458.8,448.2 508.8,448.2 516.2,450.1 535.0,453.2 550.0,453.9 550.0,454.5 590.0,454.8 605.0,452.0 615.0,447.0 625.0,443.2 632.5,435.8 639.5,432.6 657.5,432.6 674.5,435.8 681.5,439.5 695.5,444.5 702.5,452.0 708.1,454.5" fill="none" stroke="#ffffff" stroke-width="1" stroke-linejoin="round"/><polyline points="835.0,456.0 856.2,456.0 860.0,457.0 928.8,457.0 935.0,454.5 952.5,453.9 958.8,450.1 966.2,447.6 972.5,445.5 985.0,445.5 986.5,445.5 996.2,450.1 1007.5,454.5 1028.8,455.1 1050.0,451.4 1062.5,443.9 1070.5,441.4 1078.8,440.1 1090.0,443.2 1105.0,451.4 1112.5,447.6 1119.5,435.8 1126.5,421.4 1131.2,420.1 1140.5,420.4 1146.9,423.5" fill="none" stroke="#ffff00" stroke-width="1" stroke-linejoin="round"/><polyline points="797.5,455.5 856.2,455.5 860.0,456.8 915.0,456.8 928.8,455.5 952.5,455.5 958.8,452.0 965.0,451.4 972.5,449.5 985.0,449.5 987.5,449.5 1010.0,449.8 1031.2,453.2 1050.0,453.2 1062.5,449.5 1075.0,446.4 1105.5,446.4 1112.5,443.9 1119.5,438.2 1126.5,432.6 1133.5,434.1 1140.5,435.5 1146.9,436.6" fill="none" stroke="#ffffff" stroke-width="1" stroke-linejoin="round"/><polyline points="1234.5,452.0 1257.5,452.2 1275.0,454.5 1293.8,454.5 1302.5,453.9 1312.5,453.2 1322.5,448.9 1328.8,448.2 1335.0,449.2 1337.5,448.2 1350.0,448.2 1355.0,450.1 1375.0,450.1 1381.2,448.2 1387.5,450.8 1425.0,451.5 1430.2,452.0 1437.5,448.5 1449.0,448.2 1465.5,446.8 1472.5,450.1 1486.5,450.1 1500.5,453.2 1514.5,453.9 1521.5,452.0 1528.5,444.5 1535.5,442.6 1542.5,441.4 1549.5,430.8 1556.5,427.6 1563.5,420.8 1569.6,407.6" fill="none" stroke="#ffff00" stroke-width="1" stroke-linejoin="round"/><polyline points="1234.5,453.2 1310.0,453.9 1320.0,452.0 1356.2,451.4 1362.5,450.1 1375.0,450.1 1381.2,448.5 1387.5,450.8 1425.0,451.0 1430.2,452.0 1437.5,449.5 1499.0,449.5 1506.5,452.0 1519.0,452.0 1528.5,447.6 1542.5,447.6 1549.5,442.6 1556.5,440.8 1563.5,432.0 1569.6,425.5" fill="none" stroke="#ffffff" stroke-width="1" stroke-linejoin="round"/></g><g shape-rendering="crispEdges" clip-path="url(#cp2)"><polyline points="492.4,721.5 499.4,721.5 506.4,719.8 513.4,719.0 519.9,709.3" fill="none" stroke="#ff80ff" stroke-width="1" stroke-linejoin="round"/><polyline points="422.3,724.2 429.3,723.6 436.5,725.5 443.3,727.5 450.4,729.6 457.6,730.7 464.6,729.6 471.6,726.3 478.7,723.1 485.4,721.0 492.4,719.3 499.4,718.2 506.4,716.1 513.4,710.9 517.0,699.5 520.4,686.5" fill="none" stroke="#ffff00" stroke-width="1" stroke-linejoin="round"/><polyline points="387.4,715.0 393.4,715.0 399.1,717.7 408.8,723.9 415.3,728.8 421.8,732.4 433.2,732.4 438.1,731.2 451.1,730.1 464.1,727.5 471.4,721.5 478.7,716.6 485.2,713.3 492.6,710.9 499.9,709.6 506.4,710.1 512.9,706.0 516.1,689.8 518.6,680.0 520.7,658.9" fill="none" stroke="#ffffff" stroke-width="1" stroke-linejoin="round"/><polyline points="825.3,723.4 833.0,676.0" fill="none" stroke="#ffffff" stroke-width="1" stroke-linejoin="round"/></g><g shape-rendering="auto"><path d="M393.0 363.0L380.0 366.3" stroke="#dcdcdc" stroke-width="1" fill="none"/><polygon points="380.0,366.3 380.0,369.9 384.0,369.9" fill="#c8c8c8"/><text class="gl" x="397" y="366">19.75</text><path d="M957.0 368.4L944.0 372.0" stroke="#dcdcdc" stroke-width="1" fill="none"/><polygon points="944.0,372.0 944.0,375.6 948.0,375.6" fill="#c8c8c8"/><text class="gl" x="959" y="371.3">18.76</text><path d="M1139.0 118.8L1126.0 112.2" stroke="#dcdcdc" stroke-width="1" fill="none"/><polygon points="1126.0,112.2 1130.0,112.2 1126.0,116.2" fill="#c8c8c8"/><text class="gl" x="1140" y="124">26.15</text><path d="M1310.0 368.0L1297.2 371.6" stroke="#dcdcdc" stroke-width="1" fill="none"/><polygon points="1297.2,371.6 1297.2,375.2 1301.2,375.2" fill="#c8c8c8"/><text class="gl" x="1313.7" y="371">18.18</text><path d="M1558.0 118.6L1571.0 112.2" stroke="#dcdcdc" stroke-width="1" fill="none"/><polygon points="1567.4,112.2 1571.0,112.2 1571.0,116.0" fill="#c8c8c8"/><text class="gl" x="1525" y="124">26.15</text><path d="M533.0 490.0L520.0 483.2" stroke="#dcdcdc" stroke-width="1" fill="none"/><polygon points="520.0,483.2 524.0,483.2 520.0,487.2" fill="#c8c8c8"/><text class="gl" x="534" y="495">26.15</text><path d="M372.0 744.0L359.0 747.5" stroke="#dcdcdc" stroke-width="1" fill="none"/><polygon points="359.0,747.5 359.0,751.1 363.0,751.1" fill="#c8c8c8"/><text class="gl" x="376" y="747">18.06</text><path d="M845.0 490.0L832.0 483.2" stroke="#dcdcdc" stroke-width="1" fill="none"/><polygon points="832.0,483.2 836.0,483.2 832.0,487.2" fill="#c8c8c8"/><text class="gl" x="846" y="495">26.15</text><path d="M810.2 742.0L797.2 748.2" stroke="#dcdcdc" stroke-width="1" fill="none"/><polygon points="797.2,748.2 797.2,751.8 801.2,751.8" fill="#c8c8c8"/><text class="gl" x="813" y="744.8">18.06</text><path d="M1254.0 490.0L1241.0 483.2" stroke="#dcdcdc" stroke-width="1" fill="none"/><polygon points="1241.0,483.2 1245.0,483.2 1241.0,487.2" fill="#c8c8c8"/><text class="gl" x="1255" y="495">26.15</text><path d="M1247.0 739.4L1234.4 745.5" stroke="#dcdcdc" stroke-width="1" fill="none"/><polygon points="1234.4,745.5 1234.4,749.1 1238.4,749.1" fill="#c8c8c8"/><text class="gl" x="1249" y="741.5">18.06</text></g></svg>
<div id="lp"><div class="a" style="left:2px;top:0;width:275px;height:1px;background:#fff"></div><div class="a" style="left:2px;top:1px;width:275px;height:24px;border-radius:9px 11px 0 0;background:linear-gradient(#747276,#5e5c60 35%,#424244 80%,#38383a)"></div><div class="a" style="left:0;top:0;width:2px;height:688px;background:#a6a6a6"></div><div class="a" style="left:2px;top:20px;width:4px;height:668px;background:linear-gradient(90deg,#777,#3c3c3c 60%,#1a1a1a)"></div><div class="a" style="left:272px;top:20px;width:5px;height:668px;background:linear-gradient(90deg,#2a2a2a,#5a5a5a 50%,#444)"></div><div class="a" style="left:6px;top:23px;width:249px;height:665px;background:#000"></div><div class="a" style="left:11px;top:6px;width:61px;height:17px;background:#000;border-radius:3px 3px 0 0;color:#fff;font-size:14px;line-height:15px;text-align:center;white-space:nowrap">东兴资讯</div><div class="a" style="left:74px;top:7px;width:66px;height:16px;background:#3c3c3c;border-radius:3px 3px 0 0;color:#9c9c9c;font-size:14px;line-height:21px;text-align:center;white-space:nowrap;overflow:hidden">技术指标</div><div class="a" style="left:255px;top:23px;width:17px;height:665px;background:#f0f0f0"></div><div class="a" style="left:263px;top:40px;width:2px;height:406px;background:#8c8c8c"></div><div class="sh" style="top:28px"><span>公告</span></div><div class="it" style="top:61px"><span>上交所公告<b></b></span></div><div class="it" style="top:89px"><span>深交所公告<b></b></span></div><div class="a" style="left:11px;top:119px;width:239px;height:25px;box-sizing:border-box;border:1px solid #b01414;background:linear-gradient(#8a0e0e,#5e0606 55%,#3e0303)"></div><div class="it" style="top:117px"><span>三板公告<b></b></span></div><div class="it" style="top:145px"><span>紧急公告<b></b></span></div><div class="sh" style="top:175px"><span>同花顺</span></div><div class="it" style="top:208px"><span>语音解盘<b></b></span></div><div class="it" style="top:236px"><span>操盘必读<b></b></span></div><div class="it" style="top:264px"><span>实时解盘<b></b></span></div><div class="it" style="top:292px"><span>财经要闻<b></b></span></div><div class="it" style="top:320px"><span>股市焦点<b></b></span></div><div class="it" style="top:348px"><span>黑马推荐<b></b></span></div><div class="it" style="top:376px"><span>后市预测<b></b></span></div><div class="it" style="top:404px"><span>个股公告<b></b></span></div><div class="it" style="top:432px"><span>板块风云<b></b></span></div><div class="it" style="top:460px"><span>机构专栏<b></b></span></div><div class="it" style="top:488px"><span>港澳<span style="position:static;letter-spacing:-1px">F10</span><b></b></span></div><div class="sh" style="top:518px"><span>港澳资讯</span></div><div class="it" style="top:551px"><span>特别提示<b></b></span></div><div class="it" style="top:579px"><span>新股发行与配售<b></b></span></div><div class="it" style="top:607px"><span>创业板<b></b></span></div><div class="it" style="top:635px"><span>港澳资讯特别关注<b></b></span></div><div class="it" style="top:663px"><span>财经证券要闻<b></b></span></div></div><div class="a" style="left:277px;top:90px;width:22px;height:689px;background:#000"></div><div class="a" style="left:278px;top:90px;width:21px;height:53px;padding-top:1px;box-sizing:border-box;background:#c4c4c4;border:1px solid #c00000;border-top:none;color:#000;font-size:12px;line-height:14px;text-align:center"><svg class="a" style="left:6px;top:8px" width="8" height="7" viewBox="0 0 8 7"><rect x="0" y="0" width="1.6" height="7" fill="#111"/><path d="M7.6 0V7L2.4 3.5Z" fill="#111"/></svg><div class="a" style="left:0;top:18px;width:19px">资<br>讯</div></div><div class="vt" style="top:143px;height:69px;padding-top:7.5px">分<br>时<br>走<br>势</div><div class="vt" style="top:212px;height:69px;padding-top:7.5px">技<br>术<br>分<br>析</div><div class="vt" style="top:281px;height:69px;padding-top:7.5px">公<br>司<br>资<br>讯</div><div class="vt" style="top:350px;height:54px;padding-top:7.0px">自<br>选<br>股</div><div class="vt" style="top:404px;height:69px;padding-top:7.5px">综<br>合<br>排<br>名</div><div class="vt" style="top:473px;height:53px;padding-top:7px;border-bottom:none">更<br>多<br><span style="line-height:8px;font-size:10px;display:block;width:19px">.<br>.</span></div>
<div class="a" style="left:299px;top:90px;width:759px;height:1px;background:#808080"></div><div id="dt"><div class="a" style="left:0;top:0;width:15px;height:34px;background:linear-gradient(90deg,#bdbdbd,#d4d4d4 60%,#e2e2e2)"></div><div class="a" style="left:0;top:0;width:758px;height:1px;background:#fff"></div><div class="a" style="left:0;top:33px;width:758px;height:1px;background:#fff"></div><div class="a" style="left:757px;top:0;width:1px;height:34px;background:#fff"></div><svg class="a" style="left:3px;top:5px" width="9" height="8" viewBox="0 0 9 8"><path d="M1 .8L8 7.2M8 .8L1 7.2" stroke="#3a3a3a" stroke-width="1.9" fill="none"/></svg><div class="a" style="left:23px;top:5px;width:1px;height:24px;background:repeating-linear-gradient(#a8a8a8 0 1px,transparent 1px 2px)"></div><div class="a" style="left:25px;top:5px;width:1px;height:24px;background:repeating-linear-gradient(#a8a8a8 0 1px,transparent 1px 2px)"></div><svg class="a" style="left:38px;top:12px" width="17" height="11" viewBox="0 0 17 11"><path d="M0 3H17M0 9H17" stroke="#8a8a8a" stroke-width="1"/><rect x="5.5" y="1.5" width="3" height="3" fill="#444"/><rect x="7.5" y="7.5" width="3" height="3" fill="#444"/></svg><svg class="a" style="left:67px;top:10px" width="16" height="15" viewBox="0 0 16 15"><path d="M0 .8H15.5M0 12H15.5M0 14H15.5" stroke="#8a8a8a" stroke-width="1"/><text x="7.6" y="10.4" text-anchor="middle" font-family="Liberation Sans,sans-serif" font-size="10" fill="#8a8a8a">AG</text></svg><div class="a" style="left:97px;top:5px;width:24px;height:24px;box-sizing:border-box;border:1px solid #b4b4b4;background:linear-gradient(#c4c4c4,#d2d2d2);border-radius:1px"></div><svg class="a" style="left:104px;top:9px" width="12" height="17" viewBox="0 0 12 17"><path d="M1 1V13.2L4.2 10.4L6.6 15.8L8.8 14.8L6.5 9.6H10.6Z" fill="#f2cf10" stroke="#8a6a08" stroke-width="1"/><path d="M5.6 10.6L7.6 15.2" stroke="#222" stroke-width="1.6"/></svg><svg class="a" style="left:136px;top:10px" width="15" height="15" viewBox="0 0 15 15"><path d="M.5 14.5L14.5 .5" stroke="#2a5caa" stroke-width="1.3"/></svg><div class="da" style="left:157px"></div><svg class="a" style="left:175px;top:9px" width="17" height="17" viewBox="0 0 17 17"><path d="M.5 9L9 .5M3 16.5L16.5 3" stroke="#2a5caa" stroke-width="1.2"/><circle cx="5" cy="4.5" r="1.2" fill="#111"/><circle cx="12" cy="4.5" r="1.2" fill="#111"/><circle cx="4.5" cy="12.5" r="1.2" fill="#111"/></svg><div class="da" style="left:196px"></div><svg class="a" style="left:212px;top:10px" width="17" height="16" viewBox="0 0 17 16"><path d="M.5 1L6 9L10 4L16 15" fill="none" stroke="#2a5caa" stroke-width="1.2"/></svg><div class="da" style="left:235px"></div><svg class="a" style="left:252px;top:9px" width="15" height="17" viewBox="0 0 15 17"><path d="M0 1H14.5M9.5 5H14.5M9.5 8H14.5M0 12H14.5M0 15.5H14.5" stroke="#444" stroke-width="1"/><path d="M0 15.5H14.5" stroke="#2a5caa" stroke-width="1.4"/><text x="0" y="9.6" font-family="Liberation Sans,sans-serif" font-weight="bold" font-size="9" fill="#2a5caa">G</text></svg><div class="da" style="left:274px"></div><svg class="a" style="left:291px;top:10px" width="15" height="16" viewBox="0 0 15 16"><path d="M1 0V16" stroke="#2a5caa" stroke-width="1.4"/><path d="M5 0V16M9.3 0V16M13.6 0V16" stroke="#111" stroke-width="1.2"/></svg><div class="da" style="left:313px"></div><svg class="a" style="left:329px;top:10px" width="17" height="16" viewBox="0 0 17 16"><path d="M1 0V15H16" fill="none" stroke="#111" stroke-width="1.6"/><path d="M1.5 14.5L15.5 .5" stroke="#111" stroke-width="1.1"/><path d="M2 14L6 1M2 14L10 2.5M2 14L16 6.5M2 14L16.5 10M2 14L16.5 12.6" stroke="#2a5caa" stroke-width=".9"/></svg><div class="da" style="left:352px"></div><svg class="a" style="left:368px;top:9px" width="18" height="18" viewBox="0 0 18 18"><path d="M1 16L7.5 9.5M4.4 6.4L9.9 1.4M5.9 7.9L11.4 2.9M7.3 9.3L12.8 4.3M8.8 10.8L14.3 5.8M10.2 12.2L15.7 7.2" stroke="#2a5caa" stroke-width="1"/><path d="M8.5 0L3 5L11.5 13.5L17 8.5" fill="none" stroke="#111" stroke-width="1.1"/></svg><div class="da" style="left:391px"></div><svg class="a" style="left:408px;top:9px" width="16" height="17" viewBox="0 0 16 17"><rect x="2.5" y="2.5" width="11" height="11.5" fill="none" stroke="#2a5caa" stroke-width="1.5"/><rect x=".8" y=".8" width="3" height="3" fill="#fff" stroke="#111" stroke-width="1"/><rect x="12" y="12.4" width="3" height="3" fill="#fff" stroke="#111" stroke-width="1"/></svg><div class="da" style="left:430px"></div><svg class="a" style="left:446px;top:10px" width="16" height="15" viewBox="0 0 16 15"><path d="M5 .8H11L15.2 5V10L11 14.2H5L.8 10V5Z" fill="none" stroke="#2a5caa" stroke-width="1.3"/></svg><div class="da" style="left:469px"></div><div class="a" style="left:485px;top:7px;width:18px;height:22px;font-family:'Liberation Serif',serif;font-weight:bold;font-size:18px;line-height:22px;color:#2a5caa;text-align:center">A</div><div class="da" style="left:508px"></div><svg class="a" style="left:524px;top:9px" width="17" height="17" viewBox="0 0 17 17"><circle cx="14.80" cy="8.50" r="2.3" fill="#2a5caa"/><circle cx="12.95" cy="12.95" r="2.3" fill="#2a5caa"/><circle cx="8.50" cy="14.80" r="2.3" fill="#2a5caa"/><circle cx="4.05" cy="12.95" r="2.3" fill="#2a5caa"/><circle cx="2.20" cy="8.50" r="2.3" fill="#2a5caa"/><circle cx="4.05" cy="4.05" r="2.3" fill="#2a5caa"/><circle cx="8.50" cy="2.20" r="2.3" fill="#2a5caa"/><circle cx="12.95" cy="4.05" r="2.3" fill="#2a5caa"/><circle cx="8.5" cy="8.5" r="6" fill="#2a5caa"/><circle cx="8.5" cy="8.5" r="3.2" fill="#f0f0f0"/><circle cx="8.5" cy="8.5" r="1.5" fill="#2a5caa"/></svg><div class="da" style="left:547px"></div><svg class="a" style="left:563px;top:8px" width="18" height="19" viewBox="0 0 18 19"><rect x=".8" y=".8" width="12" height="12" fill="#9ab8dc" stroke="#2a5caa" stroke-width="1.4"/><path d="M3 4.5L13.5 14M14.5 4L4 14" stroke="#d8d8d8" stroke-width="1.8"/><path d="M3 4.5L13.5 14M14.5 4L4 14" stroke="#909090" stroke-width=".7"/><ellipse cx="4.6" cy="15.6" rx="2.6" ry="2" fill="none" stroke="#e04040" stroke-width="1.6"/><ellipse cx="13" cy="15.6" rx="2.6" ry="2" fill="none" stroke="#e04040" stroke-width="1.6"/></svg><div class="da" style="left:586px"></div><svg class="a" style="left:602px;top:10px" width="17" height="16" viewBox="0 0 17 16"><path d="M2.2 2.2L14.8 13.8M14.8 2.2L2.2 13.8" stroke="#b01010" stroke-width="4.6"/><path d="M2.4 2.4L14.6 13.6M14.6 2.4L2.4 13.6" stroke="#f02828" stroke-width="3.2"/></svg><div class="da" style="left:625px"></div><div class="a" style="left:640px;top:7px;width:1px;height:20px;background:#b0b0b0;box-shadow:1px 0 0 #fff"></div><svg class="a" style="left:656px;top:7px" width="20" height="20" viewBox="0 0 20 20"><rect x=".8" y="1" width="4.6" height="17" fill="none" stroke="#2a5caa" stroke-width="1.3"/><path d="M6 13.5H18.5V18H6" fill="none" stroke="#2a5caa" stroke-width="1.1" stroke-dasharray="1.2 1.2"/><path d="M8.5 1.5L18 11" stroke="#111" stroke-width="1.2"/><path d="M8 1H12M8 1V5M18.5 11.5H14.5M18.5 11.5V7.5" stroke="#111" stroke-width="1.2" fill="none"/></svg><div class="a" style="left:689px;top:7px;width:1px;height:20px;background:#b0b0b0;box-shadow:1px 0 0 #fff"></div><div class="a" style="left:699px;top:9px;width:26px;font-size:12px;line-height:16px;color:#444;white-space:nowrap">颜色</div><div class="a" style="left:729px;top:5px;width:25px;height:24px;box-sizing:border-box;background:#ffff00;border:1px solid #c8c8dc"></div></div>
</body></html>
